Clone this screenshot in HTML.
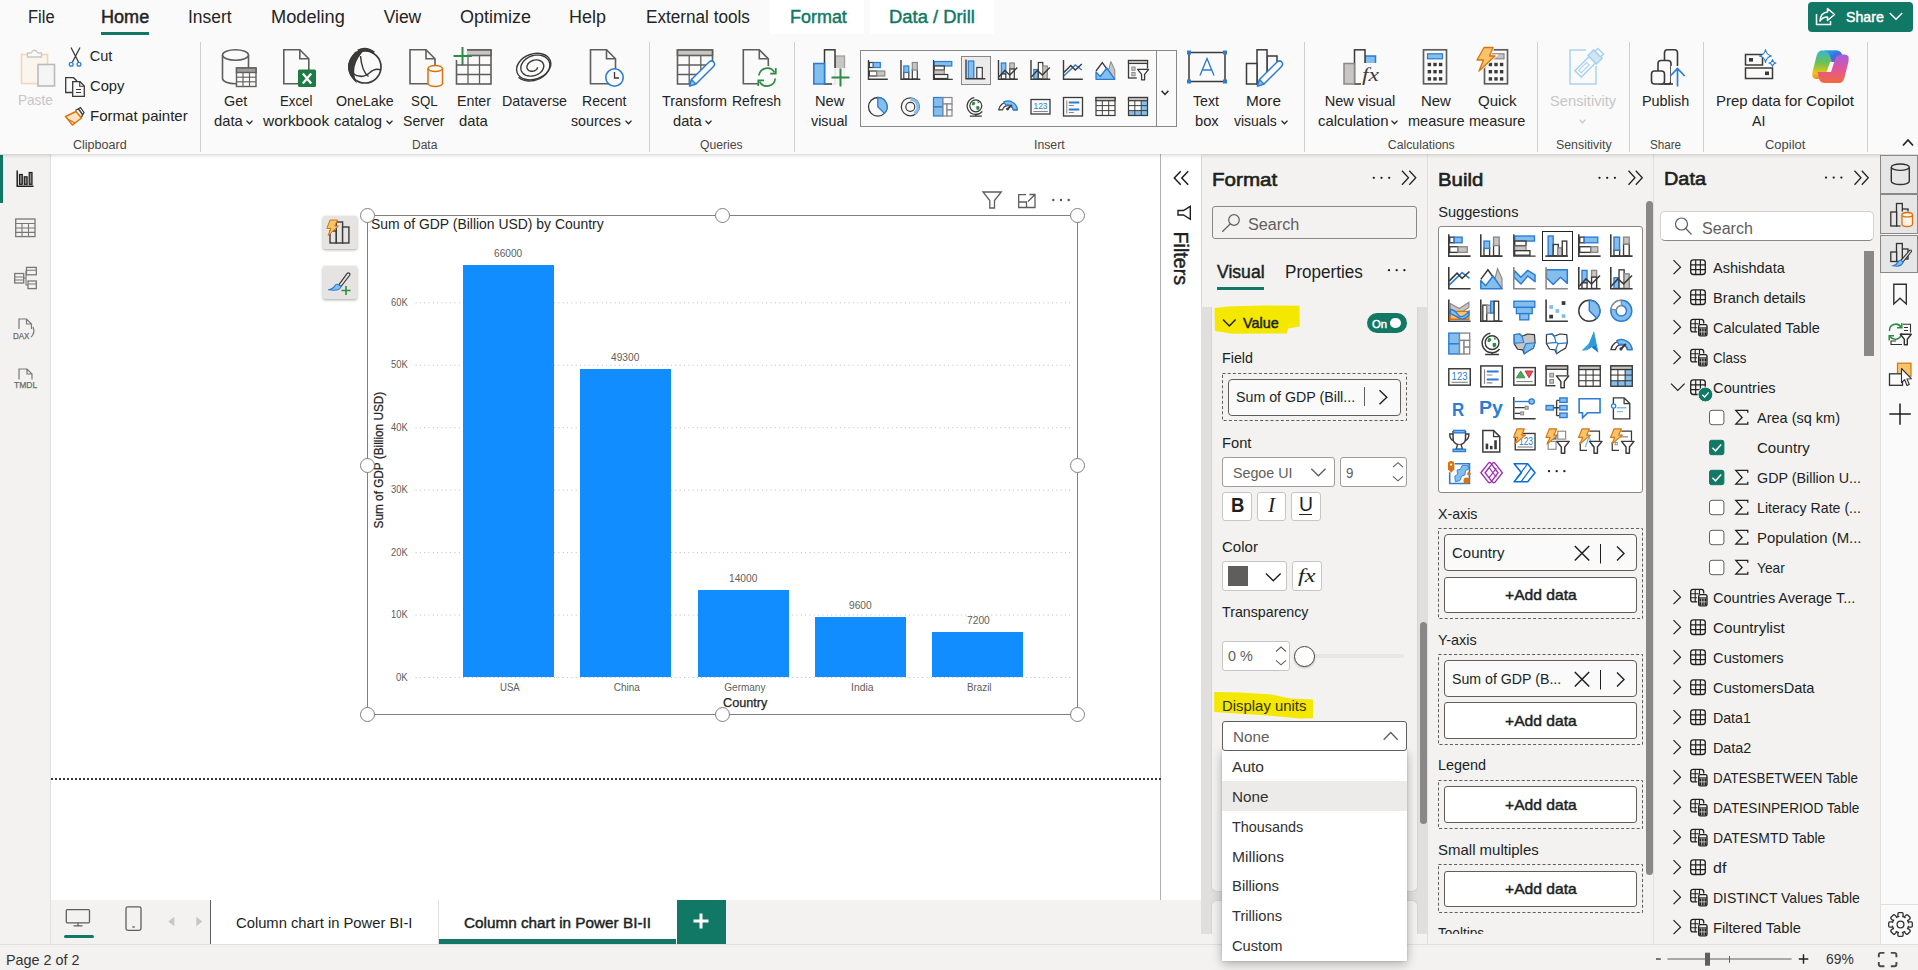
<!DOCTYPE html>
<html lang="en"><head><meta charset="utf-8"><title>Power BI Desktop</title><style>
*{box-sizing:border-box;margin:0;padding:0}
html,body{width:1918px;height:970px;overflow:hidden;background:#fff}
body{position:relative;font-family:"Liberation Sans",sans-serif;color:#252423}
#root{position:absolute;left:0;top:0;width:1918px;height:970px;overflow:hidden}
#root div,#root svg,#root span{position:absolute}
#root svg{overflow:visible}
.t{white-space:nowrap;line-height:1;transform-origin:0 0}
.sr{font-family:"Liberation Serif",serif}
.sb{-webkit-text-stroke:0.45px currentColor}
.bd{font-weight:bold}
.hd{-webkit-text-stroke:0.6px currentColor}
.sl{-webkit-text-stroke:0.25px currentColor}
</style></head><body><div id="root">
<div style="left:0px;top:0px;width:1918px;height:154px;background:#fafafa;"></div>
<div style="left:770px;top:0px;width:94px;height:34px;background:#ffffff;"></div>
<div style="left:870px;top:0px;width:124px;height:34px;background:#ffffff;"></div>
<div style="left:51px;top:154px;width:1110px;height:746px;background:#ffffff;"></div>
<div style="left:0px;top:154px;width:51px;height:790px;background:#f3f2f1;border-right:1px solid #e1dfdd;"></div>
<div style="left:0px;top:155px;width:3px;height:48px;background:#117865;"></div>
<div style="left:1160px;top:154px;width:1px;height:746px;background:#b3b0ad;"></div>
<div style="left:1161px;top:154px;width:40px;height:746px;background:#ffffff;"></div>
<div style="left:51px;top:900px;width:1150px;height:44px;background:#f3f2f1;"></div>
<div style="left:1201px;top:154px;width:226px;height:790px;background:#f3f2f1;"></div>
<div style="left:1427px;top:154px;width:1px;height:790px;background:#e1dfdd;"></div>
<div style="left:1428px;top:154px;width:225px;height:790px;background:#f3f2f1;"></div>
<div style="left:1653px;top:154px;width:1px;height:790px;background:#e1dfdd;"></div>
<div style="left:1654px;top:154px;width:226px;height:790px;background:#f3f2f1;"></div>
<div style="left:1880px;top:154px;width:38px;height:790px;background:#fafafa;border-left:1px solid #e1dfdd;"></div>
<div style="left:0px;top:944px;width:1918px;height:26px;background:#f3f2f1;border-top:1px solid #e1dfdd;"></div>
<div style="left:0px;top:154px;width:1918px;height:5px;background:linear-gradient(to bottom,rgba(0,0,0,0.13),rgba(0,0,0,0.03) 60%,rgba(0,0,0,0));"></div>
<span class="t" style="left:27.95px;top:9.00px;font-size:17.5px;color:#252423;transform:scaleX(0.9423);">File</span>
<span class="t sb" style="left:101.35px;top:9.00px;font-size:17.5px;color:#252423;transform:scaleX(1.0319);">Home</span>
<span class="t" style="left:187.65px;top:9.00px;font-size:17.5px;color:#252423;transform:scaleX(0.9953);">Insert</span>
<span class="t" style="left:270.65px;top:9.00px;font-size:17.5px;color:#252423;transform:scaleX(1.0400);">Modeling</span>
<span class="t" style="left:383.65px;top:9.00px;font-size:17.5px;color:#252423;">View</span>
<span class="t" style="left:459.65px;top:9.00px;font-size:17.5px;color:#252423;transform:scaleX(1.0265);">Optimize</span>
<span class="t" style="left:568.65px;top:9.00px;font-size:17.5px;color:#252423;transform:scaleX(1.0243);">Help</span>
<span class="t" style="left:645.65px;top:9.00px;font-size:17.5px;color:#252423;transform:scaleX(0.9797);">External tools</span>
<span class="t sb" style="left:789.65px;top:9.00px;font-size:17.5px;color:#117865;transform:scaleX(1.0259);">Format</span>
<span class="t sb" style="left:888.65px;top:9.00px;font-size:17.5px;color:#117865;transform:scaleX(1.0513);">Data / Drill</span>
<div style="left:101px;top:32px;width:48px;height:3px;background:#117865;"></div>
<div style="left:1807.5px;top:2px;width:105.5px;height:30px;background:#117865;border-radius:4px;"></div>
<span class="t sb" style="left:1845.70px;top:9.00px;font-size:15px;color:#ffffff;transform:scaleX(0.9430);">Share</span>
<svg style="left:1815px;top:6px;" width="22" height="20" viewBox="0 0 22 20"><path d="M12.5 2.5 L19.5 8.5 L12.5 14.5 V11 C8.5 11 6.5 12.5 5 15 C5.2 10 8 6.5 12.5 6 Z" fill="none" stroke="#fff" stroke-width="1.5" stroke-linejoin="round"/><path d="M1.5 8 V18.5 H15.5 V15" fill="none" stroke="#fff" stroke-width="1.5"/></svg>
<svg style="left:1889px;top:12px;" width="14" height="9" viewBox="0 0 14 9"><path d="M0.8 1 L7 7.2 L13.2 1" fill="none" stroke="#fff" stroke-width="1.6"/></svg>
<div style="left:200px;top:42px;width:1px;height:110px;background:#d2d0ce;"></div>
<div style="left:649px;top:42px;width:1px;height:110px;background:#d2d0ce;"></div>
<div style="left:794px;top:42px;width:1px;height:110px;background:#d2d0ce;"></div>
<div style="left:1304px;top:42px;width:1px;height:110px;background:#d2d0ce;"></div>
<div style="left:1537px;top:42px;width:1px;height:110px;background:#d2d0ce;"></div>
<div style="left:1628.5px;top:42px;width:1px;height:110px;background:#d2d0ce;"></div>
<div style="left:1703px;top:42px;width:1px;height:110px;background:#d2d0ce;"></div>
<div style="left:1867px;top:42px;width:1px;height:110px;background:#d2d0ce;"></div>
<span class="t" style="left:73.05px;top:139.00px;font-size:12.3px;color:#484644;transform:scaleX(1.0185);">Clipboard</span>
<span class="t" style="left:411.75px;top:139.00px;font-size:12.3px;color:#484644;transform:scaleX(0.9742);">Data</span>
<span class="t" style="left:699.75px;top:139.00px;font-size:12.3px;color:#484644;transform:scaleX(0.9896);">Queries</span>
<span class="t" style="left:1033.75px;top:139.00px;font-size:12.3px;color:#484644;transform:scaleX(0.9951);">Insert</span>
<span class="t" style="left:1387.75px;top:139.00px;font-size:12.3px;color:#484644;">Calculations</span>
<span class="t" style="left:1555.75px;top:139.00px;font-size:12.3px;color:#484644;transform:scaleX(1.0046);">Sensitivity</span>
<span class="t" style="left:1650.25px;top:139.00px;font-size:12.3px;color:#484644;transform:scaleX(0.9478);">Share</span>
<span class="t" style="left:1764.75px;top:139.00px;font-size:12.3px;color:#484644;transform:scaleX(1.0531);">Copilot</span>
<svg style="left:1902px;top:138px;" width="12" height="9" viewBox="0 0 12 9"><path d="M1 7.5 L6 2 L11 7.5" fill="none" stroke="#252423" stroke-width="1.7"/></svg>
<span class="t" style="left:17.71px;top:93.00px;font-size:14.6px;color:#c8c6c4;transform:scaleX(0.9304);">Paste</span>
<span class="t" style="left:89.71px;top:49.00px;font-size:14.6px;color:#252423;">Cut</span>
<span class="t" style="left:89.71px;top:79.00px;font-size:14.6px;color:#252423;transform:scaleX(1.0103);">Copy</span>
<span class="t" style="left:89.71px;top:109.00px;font-size:14.6px;color:#252423;transform:scaleX(1.0298);">Format painter</span>
<span class="t" style="left:224.21px;top:94.00px;font-size:14.6px;color:#252423;transform:scaleX(0.9872);">Get</span>
<span class="t" style="left:213.71px;top:114.00px;font-size:14.6px;color:#252423;transform:scaleX(1.0114);">data</span>
<svg style="left:246px;top:119.5px;" width="7" height="5" viewBox="0 0 7 5"><path d="M0.5 0.6 L3.5 3.8 L6.5 0.6" fill="none" stroke="#252423" stroke-width="1.3"/></svg>
<span class="t" style="left:280.01px;top:94.00px;font-size:14.6px;color:#252423;transform:scaleX(0.9087);">Excel</span>
<span class="t" style="left:263.01px;top:114.00px;font-size:14.6px;color:#252423;transform:scaleX(1.0586);">workbook</span>
<span class="t" style="left:336.41px;top:94.00px;font-size:14.6px;color:#252423;transform:scaleX(0.9746);">OneLake</span>
<span class="t" style="left:333.51px;top:114.00px;font-size:14.6px;color:#252423;transform:scaleX(1.0184);">catalog</span>
<svg style="left:386px;top:119.5px;" width="7" height="5" viewBox="0 0 7 5"><path d="M0.5 0.6 L3.5 3.8 L6.5 0.6" fill="none" stroke="#252423" stroke-width="1.3"/></svg>
<span class="t" style="left:410.51px;top:94.00px;font-size:14.6px;color:#252423;transform:scaleX(0.9119);">SQL</span>
<span class="t" style="left:403.41px;top:114.00px;font-size:14.6px;color:#252423;transform:scaleX(0.9662);">Server</span>
<span class="t" style="left:457.21px;top:94.00px;font-size:14.6px;color:#252423;transform:scaleX(0.9753);">Enter</span>
<span class="t" style="left:459.41px;top:114.00px;font-size:14.6px;color:#252423;transform:scaleX(1.0149);">data</span>
<span class="t" style="left:502.21px;top:94.00px;font-size:14.6px;color:#252423;transform:scaleX(0.9762);">Dataverse</span>
<span class="t" style="left:581.71px;top:94.00px;font-size:14.6px;color:#252423;transform:scaleX(0.9628);">Recent</span>
<span class="t" style="left:571.41px;top:114.00px;font-size:14.6px;color:#252423;transform:scaleX(0.9750);">sources</span>
<svg style="left:625px;top:119.5px;" width="7" height="5" viewBox="0 0 7 5"><path d="M0.5 0.6 L3.5 3.8 L6.5 0.6" fill="none" stroke="#252423" stroke-width="1.3"/></svg>
<span class="t" style="left:662.21px;top:94.00px;font-size:14.6px;color:#252423;transform:scaleX(0.9845);">Transform</span>
<span class="t" style="left:672.71px;top:114.00px;font-size:14.6px;color:#252423;transform:scaleX(1.0044);">data</span>
<svg style="left:705px;top:119.5px;" width="7" height="5" viewBox="0 0 7 5"><path d="M0.5 0.6 L3.5 3.8 L6.5 0.6" fill="none" stroke="#252423" stroke-width="1.3"/></svg>
<span class="t" style="left:732.21px;top:94.00px;font-size:14.6px;color:#252423;transform:scaleX(0.9593);">Refresh</span>
<span class="t" style="left:815.01px;top:94.00px;font-size:14.6px;color:#252423;transform:scaleX(1.0078);">New</span>
<span class="t" style="left:811.41px;top:114.00px;font-size:14.6px;color:#252423;transform:scaleX(0.9790);">visual</span>
<span class="t" style="left:1193.41px;top:94.00px;font-size:14.6px;color:#252423;transform:scaleX(0.9725);">Text</span>
<span class="t" style="left:1194.71px;top:114.00px;font-size:14.6px;color:#252423;transform:scaleX(1.0084);">box</span>
<span class="t" style="left:1245.51px;top:94.00px;font-size:14.6px;color:#252423;transform:scaleX(1.0505);">More</span>
<span class="t" style="left:1233.71px;top:114.00px;font-size:14.6px;color:#252423;transform:scaleX(0.9579);">visuals</span>
<svg style="left:1280.8px;top:119.5px;" width="7" height="5" viewBox="0 0 7 5"><path d="M0.5 0.6 L3.5 3.8 L6.5 0.6" fill="none" stroke="#252423" stroke-width="1.3"/></svg>
<span class="t" style="left:1324.71px;top:94.00px;font-size:14.6px;color:#252423;">New visual</span>
<span class="t" style="left:1317.51px;top:114.00px;font-size:14.6px;color:#252423;transform:scaleX(1.0212);">calculation</span>
<svg style="left:1391px;top:119.5px;" width="7" height="5" viewBox="0 0 7 5"><path d="M0.5 0.6 L3.5 3.8 L6.5 0.6" fill="none" stroke="#252423" stroke-width="1.3"/></svg>
<span class="t" style="left:1421.41px;top:94.00px;font-size:14.6px;color:#252423;transform:scaleX(1.0215);">New</span>
<span class="t" style="left:1407.71px;top:114.00px;font-size:14.6px;color:#252423;transform:scaleX(0.9956);">measure</span>
<span class="t" style="left:1477.71px;top:94.00px;font-size:14.6px;color:#252423;transform:scaleX(1.0326);">Quick</span>
<span class="t" style="left:1468.71px;top:114.00px;font-size:14.6px;color:#252423;transform:scaleX(0.9938);">measure</span>
<span class="t" style="left:1550.21px;top:94.00px;font-size:14.6px;color:#c8c6c4;transform:scaleX(1.0080);">Sensitivity</span>
<svg style="left:1579px;top:119px;" width="7" height="5" viewBox="0 0 7 5"><path d="M0.5 0.6 L3.5 3.8 L6.5 0.6" fill="none" stroke="#c8c6c4" stroke-width="1.3"/></svg>
<span class="t" style="left:1642.21px;top:94.00px;font-size:14.6px;color:#252423;transform:scaleX(0.9865);">Publish</span>
<span class="t" style="left:1715.71px;top:94.00px;font-size:14.6px;color:#252423;transform:scaleX(1.0220);">Prep data for</span>
<span class="t" style="left:1751.71px;top:114.00px;font-size:14.6px;color:#252423;transform:scaleX(0.9734);">AI</span>
<span class="t" style="left:1806.41px;top:94.00px;font-size:14.6px;color:#252423;transform:scaleX(1.0571);">Copilot</span>
<div style="left:860px;top:50px;width:297px;height:77px;background:#fafafa;border:1px solid #8a8886;"></div>
<div style="left:1156px;top:50px;width:21px;height:77px;background:#fafafa;border:1px solid #8a8886;"></div>
<svg style="left:1161px;top:89.5px;" width="8" height="6" viewBox="0 0 8 6"><path d="M0.6 0.8 L4 4.4 L7.4 0.8" fill="none" stroke="#252423" stroke-width="1.5"/></svg>
<div style="left:961px;top:55.5px;width:30px;height:29.5px;background:#ebebeb;border:1px solid #8a8886;"></div>
<svg style="left:0px;top:0px;" width="1918" height="160" viewBox="0 0 1918 160"><g opacity="0.55"><rect x="21.5" y="54.5" width="26" height="29" fill="#fbf3e6" stroke="#e8bd7e" stroke-width="1.6"/><path d="M27.5 57 V53 H31 Q34.5 47.5 38 53 H41.5 V57 Z" fill="#fafafa" stroke="#a19f9d" stroke-width="1.3"/><rect x="38" y="64.5" width="16.5" height="21.5" fill="#f3f2f1" stroke="#8a8886" stroke-width="1.6"/></g><path d="M71 47.5 L78.5 62 M80 47.5 L72.5 62" stroke="#3b3a39" stroke-width="1.3" fill="none"/><circle cx="71.2" cy="64.2" r="1.9" fill="none" stroke="#2b7cd3" stroke-width="1.3"/><circle cx="79" cy="64.2" r="1.9" fill="none" stroke="#2b7cd3" stroke-width="1.3"/><path d="M72 92.5 H65.7 V77.7 H73.5 L77 81" fill="none" stroke="#3b3a39" stroke-width="1.3"/><path d="M72.7 81.7 H80 L84.3 86 V96.3 H72.7 Z" fill="#fafafa" stroke="#3b3a39" stroke-width="1.3"/><path d="M79.7 82 V86.3 H84" fill="none" stroke="#3b3a39" stroke-width="1.1"/><path d="M76 89.5 H81 M76 92.5 H81" stroke="#3b3a39" stroke-width="1"/><path d="M65.5 116.5 L76 111.5 L81.5 118 L72.5 125 Z" fill="#fbe3c4" stroke="#d9730d" stroke-width="1.5" stroke-linejoin="round"/><path d="M68 119.3 L75 123" stroke="#d9730d" stroke-width="1.2"/><path d="M75.5 110.5 L80.5 107.5 L84 112.5 L81.5 117 M78.5 109 L82.5 114.5" fill="none" stroke="#3b3a39" stroke-width="1.3" stroke-linejoin="round"/><path d="M222.5 55.0 V78.6 A13.0 5.2 0 0 0 248.5 78.6 V55.0" fill="#fafafa" stroke="#605e5c" stroke-width="1.6"/><ellipse cx="235.5" cy="55.0" rx="13.0" ry="5.2" fill="#fafafa" stroke="#605e5c" stroke-width="1.6"/><rect x="236.5" y="68" width="19.5" height="18.5" fill="#fafafa" stroke="#605e5c" stroke-width="1.4"/><rect x="236.5" y="68" width="19.5" height="4.5" fill="#a19f9d" stroke="#605e5c" stroke-width="1.4"/><line x1="236.5" y1="77.2" x2="256.0" y2="77.2" stroke="#605e5c" stroke-width="1.1199999999999999"/><line x1="236.5" y1="81.8" x2="256.0" y2="81.8" stroke="#605e5c" stroke-width="1.1199999999999999"/><line x1="243.0" y1="72.5" x2="243.0" y2="86.5" stroke="#605e5c" stroke-width="1.1199999999999999"/><line x1="249.5" y1="72.5" x2="249.5" y2="86.5" stroke="#605e5c" stroke-width="1.1199999999999999"/><path d="M283.8 49.8 H299.8 L308.8 58.8 V83.8 H283.8 Z" fill="#fafafa" stroke="#605e5c" stroke-width="1.6" stroke-linejoin="miter"/><path d="M299.8 49.8 V58.8 H308.8" fill="none" stroke="#605e5c" stroke-width="1.6"/><rect x="298" y="69.5" width="18" height="17.5" rx="1.5" fill="#1e7b45"/><path d="M302.8 73.5 L311.2 83.5 M311.2 73.5 L302.8 83.5" stroke="#fff" stroke-width="2.2"/><circle cx="365" cy="67" r="16" fill="none" stroke="#3b3a39" stroke-width="1.7"/><path d="M355 52 Q340 68 357 83.5 Q349 66 364 50.5 Q359 49.5 355 52 Z" fill="#3b3a39"/><path d="M358 51 Q366 46.5 374 53" fill="none" stroke="#3b3a39" stroke-width="3"/><path d="M360.5 56 Q362 72 368.5 76.5 M352 73 Q362 80 370 72.5 Q375 67.5 381 70" fill="none" stroke="#3b3a39" stroke-width="1.5"/><path d="M410 49.8 H426 L435 58.8 V83.8 H410 Z" fill="#fafafa" stroke="#605e5c" stroke-width="1.6" stroke-linejoin="miter"/><path d="M426 49.8 V58.8 H435" fill="none" stroke="#605e5c" stroke-width="1.6"/><path d="M428 68.5 V83.5 A7.25 3 0 0 0 442.5 83.5 V68.5" fill="#fafafa" stroke="#d9730d" stroke-width="1.5"/><ellipse cx="435.25" cy="68.5" rx="7.25" ry="3" fill="#fafafa" stroke="#d9730d" stroke-width="1.5"/><rect x="456.5" y="50" width="34.5" height="34" fill="#fafafa" stroke="#605e5c" stroke-width="1.6"/><rect x="456.5" y="50" width="34.5" height="5.5" fill="#c8c6c4" stroke="#605e5c" stroke-width="1.6"/><line x1="456.5" y1="65.0" x2="491.0" y2="65.0" stroke="#605e5c" stroke-width="1.2800000000000002"/><line x1="456.5" y1="74.5" x2="491.0" y2="74.5" stroke="#605e5c" stroke-width="1.2800000000000002"/><line x1="468.0" y1="55.5" x2="468.0" y2="84" stroke="#605e5c" stroke-width="1.2800000000000002"/><line x1="479.5" y1="55.5" x2="479.5" y2="84" stroke="#605e5c" stroke-width="1.2800000000000002"/><rect x="452" y="46" width="15" height="14" fill="#fafafa"/><path d="M462.5 47 V65.5 M453.5 56 H472" stroke="#2e8b45" stroke-width="2"/><path d="M537.7 67.3 L537.5 67.8 L537.3 68.4 L536.9 69.0 L536.4 69.5 L535.8 70.0 L535.1 70.5 L534.3 70.8 L533.4 71.1 L532.5 71.2 L531.5 71.3 L530.6 71.2 L529.8 70.9 L529.0 70.6 L528.3 70.1 L527.7 69.5 L527.2 68.7 L527.0 67.9 L526.9 67.0 L527.0 66.1 L527.3 65.2 L527.8 64.2 L528.5 63.3 L529.4 62.4 L530.4 61.7 L531.6 61.0 L532.9 60.5 L534.2 60.1 L535.7 59.9 L537.1 59.9 L538.4 60.1 L539.7 60.5 L540.9 61.1 L541.9 61.8 L542.7 62.7 L543.3 63.8 L543.7 65.0 L543.8 66.3 L543.6 67.6 L543.1 68.9 L542.4 70.2 L541.4 71.5 L540.2 72.7 L538.7 73.8 L537.1 74.6 L535.3 75.3 L533.5 75.8 L531.6 76.1 L529.7 76.1 L527.9 75.8 L526.1 75.3 L524.6 74.6 L523.3 73.6 L522.2 72.4 L521.4 71.0 L520.9 69.4 L520.8 67.8 L521.0 66.1 L521.6 64.3 L522.6 62.6 L523.8 61.0 L525.4 59.4 L527.2 58.1 L529.3 56.9 L531.5 56.0 L533.9 55.4 L536.3 55.1 L538.6 55.1 L540.9 55.4 L543.1 56.0 L545.0 56.9 L546.7 58.2 L548.1 59.7 L549.1 61.4 L549.7 63.3 L549.9 65.3 L549.6 67.4 L548.9 69.5 L547.8 71.6 L546.3 73.7 L544.4 75.5 L542.2 77.2 L539.7 78.6 L537.0 79.7 L534.2 80.5 L531.3 80.9 L528.4 81.0 L525.6 80.6 L523.0 79.9 L520.6 78.8 L518.6 77.4" fill="none" stroke="#3b3a39" stroke-width="1.4" stroke-linejoin="round"/><ellipse cx="533.7" cy="66.6" rx="17.6" ry="12.6" transform="rotate(-20 533.7 66.6)" fill="none" stroke="#3b3a39" stroke-width="1.4"/><path d="M590.5 49.8 H606.5 L615.5 58.8 V83.8 H590.5 Z" fill="#fafafa" stroke="#605e5c" stroke-width="1.6" stroke-linejoin="miter"/><path d="M606.5 49.8 V58.8 H615.5" fill="none" stroke="#605e5c" stroke-width="1.6"/><circle cx="614.5" cy="77.5" r="8.7" fill="#fafafa" stroke="#2b7cd3" stroke-width="1.6"/><path d="M614.5 72 V78 H619" fill="none" stroke="#3b3a39" stroke-width="1.3"/><rect x="677.5" y="50" width="35" height="34" fill="#fafafa" stroke="#605e5c" stroke-width="1.6"/><rect x="677.5" y="50" width="35" height="5.5" fill="#c8c6c4" stroke="#605e5c" stroke-width="1.6"/><line x1="677.5" y1="65.0" x2="712.5" y2="65.0" stroke="#605e5c" stroke-width="1.2800000000000002"/><line x1="677.5" y1="74.5" x2="712.5" y2="74.5" stroke="#605e5c" stroke-width="1.2800000000000002"/><line x1="689.2" y1="55.5" x2="689.2" y2="84" stroke="#605e5c" stroke-width="1.2800000000000002"/><line x1="700.8" y1="55.5" x2="700.8" y2="84" stroke="#605e5c" stroke-width="1.2800000000000002"/><path d="M689 86 L700 72 L716 60 L716 86 Z" fill="#fafafa"/><path d="M689.5 86.0 L696.0 84.0 L713.3 66.7 Q715.8 64.2 713.6 61.9 Q711.3 59.7 708.8 62.2 L691.5 79.5 Z" fill="#fafafa" stroke="#2b7cd3" stroke-width="1.5" stroke-linejoin="round"/><path d="M689.5 86.0 L696.0 84.0 L691.5 79.5 Z" fill="#83beec" stroke="#2b7cd3" stroke-width="1.2" stroke-linejoin="round"/><path d="M743.3 49.8 H759.3 L768.3 58.8 V83.8 H743.3 Z" fill="#fafafa" stroke="#605e5c" stroke-width="1.6" stroke-linejoin="miter"/><path d="M759.3 49.8 V58.8 H768.3" fill="none" stroke="#605e5c" stroke-width="1.6"/><circle cx="767" cy="77" r="11" fill="#fafafa"/><path d="M759 75.5 A8.3 8.3 0 0 1 774.5 72.5 M775.2 78.5 A8.3 8.3 0 0 1 759.5 81.5" fill="none" stroke="#2e8b45" stroke-width="1.7"/><path d="M775.8 68 V73.6 H770.2 M758.3 86 V80.4 H764" fill="none" stroke="#2e8b45" stroke-width="1.7"/><rect x="835" y="56" width="9.5" height="28" fill="#c8c6c4" stroke="#a19f9d" stroke-width="1.3"/><rect x="824.5" y="49.8" width="10.5" height="34.2" fill="#fafafa" stroke="#3b3a39" stroke-width="1.5"/><rect x="813.8" y="63.5" width="10.7" height="20.5" fill="#83beec" stroke="#2b7cd3" stroke-width="1.5"/><rect x="832" y="68" width="18" height="18" fill="#fafafa" opacity="0.9"/><path d="M840.5 68.5 V86.5 M831.5 77.5 H849.5" stroke="#2e8b45" stroke-width="2"/><rect x="1189" y="52.5" width="36" height="29" fill="#fafafa" stroke="#3b3a39" stroke-width="1.5"/><rect x="1187" y="50.5" width="4" height="4" fill="#2b7cd3"/><rect x="1223" y="50.5" width="4" height="4" fill="#2b7cd3"/><rect x="1187" y="79.5" width="4" height="4" fill="#2b7cd3"/><rect x="1223" y="79.5" width="4" height="4" fill="#2b7cd3"/><path d="M1200 75.5 L1207 58.5 L1214 75.5 M1202.3 70 H1211.7" fill="none" stroke="#2b7cd3" stroke-width="1.4"/><g fill="#fafafa" stroke="#3b3a39" stroke-width="1.5"><rect x="1267" y="56" width="10" height="28"/><rect x="1257" y="49.8" width="10" height="34.2"/><rect x="1246.5" y="63.5" width="10.5" height="20.5"/></g><path d="M1257 86 L1268 72 L1284 60 L1284 86 Z" fill="#fafafa"/><path d="M1257.5 86.0 L1264.0 84.0 L1281.3 66.7 Q1283.8 64.2 1281.6 61.9 Q1279.3 59.7 1276.8 62.2 L1259.5 79.5 Z" fill="#fafafa" stroke="#2b7cd3" stroke-width="1.5" stroke-linejoin="round"/><path d="M1257.5 86.0 L1264.0 84.0 L1259.5 79.5 Z" fill="#83beec" stroke="#2b7cd3" stroke-width="1.2" stroke-linejoin="round"/><rect x="1365" y="56" width="10.5" height="9" fill="#83beec" stroke="#2b7cd3" stroke-width="1.5"/><rect x="1354.5" y="49.8" width="10.5" height="34.2" fill="#fafafa" stroke="#3b3a39" stroke-width="1.5"/><rect x="1344" y="63.5" width="10.5" height="20.5" fill="#c8c6c4" stroke="#8a8886" stroke-width="1.5"/><rect x="1361" y="63" width="18" height="24" fill="#fafafa"/><rect x="1423.5" y="49.8" width="23" height="34" fill="#fafafa" stroke="#605e5c" stroke-width="1.7"/><rect x="1427.5" y="53.8" width="15" height="5" fill="#83beec" stroke="#2b7cd3" stroke-width="1.2"/><rect x="1427.7" y="62.8" width="3.4" height="3.4" fill="#3b3a39"/><rect x="1433.3" y="62.8" width="3.4" height="3.4" fill="#3b3a39"/><rect x="1438.9" y="62.8" width="3.4" height="3.4" fill="#3b3a39"/><rect x="1427.7" y="70.0" width="3.4" height="3.4" fill="#3b3a39"/><rect x="1433.3" y="70.0" width="3.4" height="3.4" fill="#3b3a39"/><rect x="1438.9" y="70.0" width="3.4" height="3.4" fill="#3b3a39"/><rect x="1427.7" y="77.2" width="3.4" height="3.4" fill="#3b3a39"/><rect x="1433.3" y="77.2" width="3.4" height="3.4" fill="#3b3a39"/><rect x="1438.9" y="77.2" width="3.4" height="3.4" fill="#3b3a39"/><rect x="1484.5" y="49.8" width="23" height="34" fill="#fafafa" stroke="#605e5c" stroke-width="1.7"/><rect x="1491" y="53.8" width="13" height="5" fill="#c8c6c4" stroke="#8a8886" stroke-width="1.2"/><rect x="1488.7" y="62.8" width="3.4" height="3.4" fill="#3b3a39"/><rect x="1494.3" y="62.8" width="3.4" height="3.4" fill="#3b3a39"/><rect x="1499.9" y="62.8" width="3.4" height="3.4" fill="#3b3a39"/><rect x="1488.7" y="70.0" width="3.4" height="3.4" fill="#3b3a39"/><rect x="1494.3" y="70.0" width="3.4" height="3.4" fill="#3b3a39"/><rect x="1499.9" y="70.0" width="3.4" height="3.4" fill="#3b3a39"/><rect x="1488.7" y="77.2" width="3.4" height="3.4" fill="#3b3a39"/><rect x="1494.3" y="77.2" width="3.4" height="3.4" fill="#3b3a39"/><rect x="1499.9" y="77.2" width="3.4" height="3.4" fill="#3b3a39"/><path d="M1484 47.5 L1493 47.5 L1489.5 56 L1495 56 L1479 71 L1483.5 60 L1477 60 Z" fill="#fafafa" stroke="#fafafa" stroke-width="3"/><path d="M1484 47.5 L1493 47.5 L1489.5 56 L1495 56 L1479 71 L1483.5 60 L1477 60 Z" fill="#f7c46c" stroke="#d9730d" stroke-width="1.3" stroke-linejoin="round"/><g stroke="#a9d3ef" fill="#fafafa" stroke-width="1.5"><path d="M1586 50 H1570 V84 H1596 V66"/><g transform="rotate(-45 1588 64)"><rect x="1574" y="59.5" width="20" height="9"/><rect x="1577" y="62" width="11" height="3.5" stroke-width="1.1"/><rect x="1594" y="58" width="8" height="12" fill="#cfe6f6"/><rect x="1602" y="60" width="4" height="8"/></g></g><g fill="#fafafa" stroke="#3b3a39" stroke-width="1.6"><rect x="1664.5" y="49.8" width="13" height="34" rx="3"/><rect x="1658" y="60.5" width="13" height="23.5" rx="3"/><rect x="1651.5" y="71" width="13" height="13" rx="3"/></g><rect x="1671" y="66" width="15" height="21" fill="#fafafa"/><path d="M1677.5 86.5 V69 M1670.3 76 L1677.5 68.5 L1684.7 76" fill="none" stroke="#2b7cd3" stroke-width="1.7"/><path d="M1664 84 H1673" stroke="#3b3a39" stroke-width="1.6"/><g fill="#fafafa" stroke="#3b3a39" stroke-width="1.5"><rect x="1745.5" y="54.5" width="17" height="10.5"/><rect x="1745.5" y="68" width="27" height="10.5"/></g><rect x="1749" y="58" width="4" height="3.6" fill="#3b3a39"/><rect x="1765" y="71.5" width="4" height="3.6" fill="#3b3a39"/><path d="M1765.5 49.5 Q1766.5 55 1771.5 56 Q1766.5 57 1765.5 62.5 Q1764.5 57 1759.5 56 Q1764.5 55 1765.5 49.5 Z M1772.5 59.5 Q1773 62.5 1776 63 Q1773 63.5 1772.5 66.5 Q1772 63.5 1769 63 Q1772 62.5 1772.5 59.5 Z" fill="#fafafa" stroke="#2b7cd3" stroke-width="1.1" stroke-linejoin="round"/><defs><linearGradient id="cp1" x1="0" y1="0" x2="1" y2="1"><stop offset="0" stop-color="#2aa9e8"/><stop offset="0.5" stop-color="#3b6fe0"/><stop offset="1" stop-color="#8a52d6"/></linearGradient><linearGradient id="cp2" x1="0" y1="0" x2="0" y2="1"><stop offset="0" stop-color="#35b6d8"/><stop offset="0.45" stop-color="#6fc24a"/><stop offset="0.8" stop-color="#f2c21a"/><stop offset="1" stop-color="#f08a24"/></linearGradient><linearGradient id="cp3" x1="0" y1="0" x2="0" y2="1"><stop offset="0" stop-color="#a45fe0"/><stop offset="0.5" stop-color="#e0559c"/><stop offset="1" stop-color="#f26a3a"/></linearGradient></defs><path d="M1822 50.5 H1836 Q1841 50.5 1842 55 L1844 62 H1830 L1826 74 Q1824.5 79 1819 79 H1816.5 Q1811 79 1812.5 72 L1816.5 56 Q1818 50.5 1822 50.5 Z" fill="url(#cp2)"/><path d="M1824 50.5 H1836 Q1841 50.5 1842 55 L1844 62 H1832 L1830 56 Q1829 52 1824 50.5 Z" fill="url(#cp1)"/><path d="M1839 83 H1825 Q1820 83 1819 78.5 L1817.5 72 H1831 L1835 59.5 Q1836.5 54.5 1842 54.5 H1844.5 Q1850 54.5 1848.5 61.5 L1844.5 77.5 Q1843 83 1839 83 Z" fill="url(#cp3)"/></svg>
<span class="t sr" style="left:1361.62px;top:65.00px;font-size:19px;color:#3b3a39;font-style:italic;transform:scaleX(1.2355);">fx</span>
<svg style="left:0px;top:0px;" width="1918" height="160" viewBox="0 0 1918 160"><rect x="869.3" y="62.5" width="4" height="5" fill="#fafafa" stroke="#3b3a39" stroke-width="1.2"/><rect x="873.3" y="62.5" width="7" height="5" fill="#83beec" stroke="#2b7cd3" stroke-width="1.2"/><rect x="869.3" y="71.0" width="7.5" height="5" fill="#fafafa" stroke="#3b3a39" stroke-width="1.2"/><rect x="876.8" y="71.0" width="8" height="5" fill="#c8c6c4" stroke="#8a8886" stroke-width="1.2"/><path d="M868.5 60 V79.3 H887.8" fill="none" stroke="#3b3a39" stroke-width="1.4"/><rect x="903.8" y="72.0" width="5" height="7" fill="#fafafa" stroke="#3b3a39" stroke-width="1.2"/><rect x="903.8" y="66.0" width="5" height="6.5" fill="#83beec" stroke="#2b7cd3" stroke-width="1.2"/><rect x="912.3" y="69.5" width="5" height="9.5" fill="#fafafa" stroke="#3b3a39" stroke-width="1.2"/><rect x="912.3" y="62.5" width="5" height="7.5" fill="#c8c6c4" stroke="#8a8886" stroke-width="1.2"/><path d="M901.0 60 V79.3 H920.3" fill="none" stroke="#3b3a39" stroke-width="1.4"/><rect x="934.3" y="61.5" width="17.5" height="4.5" fill="#83beec" stroke="#2b7cd3" stroke-width="1.2"/><rect x="934.3" y="66.0" width="10" height="4" fill="#fafafa" stroke="#3b3a39" stroke-width="1.2"/><rect x="934.3" y="70.5" width="10" height="4" fill="#c8c6c4" stroke="#8a8886" stroke-width="1.2"/><rect x="934.3" y="74.5" width="13.5" height="4" fill="#fafafa" stroke="#3b3a39" stroke-width="1.2"/><path d="M933.5 60 V79.3 H952.8" fill="none" stroke="#3b3a39" stroke-width="1.2"/><rect x="968.3" y="61.0" width="5.5" height="17.5" fill="#83beec" stroke="#2b7cd3" stroke-width="1.2"/><rect x="976.8" y="67.5" width="5.5" height="11" fill="#fafafa" stroke="#3b3a39" stroke-width="1.2"/><path d="M966.0 59.5 V78.8 H985.3" fill="none" stroke="#3b3a39" stroke-width="1.4"/><rect x="1001.3" y="63.0" width="4.5" height="11" fill="#83beec" stroke="#2b7cd3" stroke-width="1.2"/><rect x="1009.8" y="63.0" width="4.5" height="6" fill="#c8c6c4" stroke="#8a8886" stroke-width="1.2"/><rect x="1001.3" y="74.0" width="4.5" height="5" fill="#fafafa" stroke="#3b3a39" stroke-width="1.2"/><rect x="1009.8" y="69.0" width="4.5" height="10" fill="#fafafa" stroke="#3b3a39" stroke-width="1.2"/><path d="M998.8 77 L1004.8 70.5 L1009.8 75 L1017.3 67.5" fill="none" stroke="#3b3a39" stroke-width="1.4"/><path d="M998.5 60 V79.3 H1017.8" fill="none" stroke="#3b3a39" stroke-width="1.4"/><rect x="1033.8" y="69.5" width="4.5" height="9.5" fill="#83beec" stroke="#2b7cd3" stroke-width="1.2"/><rect x="1038.3" y="62.5" width="4.5" height="16.5" fill="#fafafa" stroke="#3b3a39" stroke-width="1.2"/><rect x="1042.8" y="66.0" width="4.5" height="13" fill="#c8c6c4" stroke="#8a8886" stroke-width="1.2"/><path d="M1031.3 77 L1037.3 70.5 L1042.3 75 L1049.8 67.5" fill="none" stroke="#3b3a39" stroke-width="1.4"/><path d="M1031.0 60 V79.3 H1050.3" fill="none" stroke="#3b3a39" stroke-width="1.4"/><path d="M1063.8 76 L1075.3 65 L1081.8 70" fill="none" stroke="#2b7cd3" stroke-width="1.4"/><path d="M1063.8 72.5 L1070.8 65.5 L1075.3 70 L1081.8 64" fill="none" stroke="#3b3a39" stroke-width="1.4"/><path d="M1063.5 60 V79.3 H1082.8" fill="none" stroke="#3b3a39" stroke-width="1.4"/><path d="M1106.3 79 L1110.8 61.5 L1114.8 70 V79 Z" fill="#c8c6c4" stroke="#8a8886" stroke-width="1"/><path d="M1096.0 71 L1102.3 62.5 L1111.3 75" fill="#fafafa" stroke="#3b3a39" stroke-width="1.3"/><path d="M1096.0 72 L1100.3 76.5 L1106.8 68 L1114.8 79.3 H1096.0 Z" fill="#83beec" stroke="#2b7cd3" stroke-width="1.3" stroke-linejoin="round"/><rect x="1128.5" y="60.5" width="19" height="17.5" fill="#fafafa" stroke="#3b3a39" stroke-width="1.3"/><rect x="1128.5" y="60.5" width="19" height="3" fill="#c8c6c4" stroke="#3b3a39" stroke-width="1.1"/><rect x="1131.8" y="67.0" width="3.3" height="3.3" fill="#c8c6c4" stroke="#8a8886" stroke-width="0.9"/><rect x="1131.8" y="72.5" width="3.3" height="3.3" fill="#c8c6c4" stroke="#8a8886" stroke-width="0.9"/><rect x="1136.8" y="68.5" width="12.5" height="12" fill="#fafafa"/><path d="M1137.6 69.3 H1148.6 L1144.6 74.3 V79.8 H1141.6 V74.3 Z" fill="#fafafa" stroke="#3b3a39" stroke-width="1.3" stroke-linejoin="round"/><circle cx="877.8" cy="106.8" r="9.3" fill="#fafafa" stroke="#3b3a39" stroke-width="1.3"/><path d="M877.8 97.5 A9.3 9.3 0 0 1 884.4 113.4 L877.8 106.8 Z" fill="#83beec" stroke="#2b7cd3" stroke-width="1.3" stroke-linejoin="round"/><circle cx="910.3" cy="106.8" r="9" fill="none" stroke="#3b3a39" stroke-width="1.2"/><circle cx="910.3" cy="106.8" r="4.5" fill="none" stroke="#3b3a39" stroke-width="1.2"/><path d="M910.3 99.3 A7.5 7.5 0 0 1 914.3 113.3" fill="none" stroke="#83beec" stroke-width="3.2"/><rect x="933.5" y="97.5" width="9.5" height="9.5" fill="#83beec" stroke="#2b7cd3" stroke-width="1.2"/><rect x="933.5" y="107.0" width="9.5" height="9" fill="#83beec" stroke="#2b7cd3" stroke-width="1.2"/><rect x="943.0" y="97.5" width="9" height="6.5" fill="#fafafa" stroke="#8a8886" stroke-width="1.2"/><rect x="943.0" y="104.0" width="4" height="12" fill="#fafafa" stroke="#8a8886" stroke-width="1.2"/><rect x="947.0" y="104.0" width="5" height="6" fill="#fafafa" stroke="#8a8886" stroke-width="1.2"/><rect x="947.0" y="110.0" width="5" height="6" fill="#fafafa" stroke="#8a8886" stroke-width="1.2"/><circle cx="975.8" cy="105.8" r="6" fill="#fafafa" stroke="#3b3a39" stroke-width="1.2"/><path d="M972.3 102.3 Q974.8 100.8 975.3 103.8 Q973.3 106.3 971.8 104.8 Z M976.3 106.3 Q980.3 104.8 979.3 108.8 Q977.3 111.3 976.3 108.8 Z M977.3 100.8 L979.8 102.8 L977.8 103.3 Z" fill="#2e8b45"/><path d="M974.3 97.6 A8.5 8.5 0 1 0 982.3 111.3" fill="none" stroke="#3b3a39" stroke-width="1.3"/><path d="M975.8 114.1 V116.1 M969.8 116.19999999999999 H981.8" stroke="#3b3a39" stroke-width="1.3"/><path d="M998.5999999999999 109.8 A9.5 9.5 0 0 1 1017.3 109.8 H1013.3 A5.5 5.5 0 0 0 1002.5999999999999 109.8 Z" fill="#fafafa" stroke="#3b3a39" stroke-width="1.2" stroke-linejoin="round"/><path d="M1003.8 101.8 A9.5 9.5 0 0 1 1017.3 109.8 H1013.3 A5.5 5.5 0 0 0 1005.8 105.3 Z" fill="#83beec" stroke="#2b7cd3" stroke-width="1.2" stroke-linejoin="round"/><path d="M1007.3 109.3 L1011.8 104.8" stroke="#3b3a39" stroke-width="1.8"/><circle cx="1007.5" cy="109.1" r="1.4" fill="#3b3a39"/><rect x="1031.0" y="99.5" width="19" height="14.5" fill="#fafafa" stroke="#3b3a39" stroke-width="1.3"/><path d="M1033.3 111.5 H1047.8" stroke="#8a8886" stroke-width="1"/><text x="1040.5" y="109.2" font-family="Liberation Sans,sans-serif" font-size="9.5" text-anchor="middle" fill="#2b7cd3" textLength="14" lengthAdjust="spacingAndGlyphs">123</text><rect x="1063.5" y="97.5" width="19" height="18.5" fill="#fafafa" stroke="#3b3a39" stroke-width="1.3"/><path d="M1066.8 100.5 V113.5" stroke="#8a8886" stroke-width="1"/><path d="M1068.8 102.5 H1079.3 M1068.8 109.5 H1079.3" stroke="#2b7cd3" stroke-width="1.8"/><path d="M1068.8 105.5 H1073.8 M1068.8 112.5 H1073.8" stroke="#8a8886" stroke-width="1"/><rect x="1096.0" y="97.5" width="19" height="18" fill="#fafafa" stroke="#3b3a39" stroke-width="1.2"/><rect x="1096.0" y="97.5" width="19" height="3.2" fill="#c8c6c4" stroke="#3b3a39" stroke-width="1.2"/><line x1="1096.0" y1="105.6" x2="1115.0" y2="105.6" stroke="#3b3a39" stroke-width="0.96"/><line x1="1096.0" y1="110.6" x2="1115.0" y2="110.6" stroke="#3b3a39" stroke-width="0.96"/><line x1="1102.3" y1="100.7" x2="1102.3" y2="115.5" stroke="#3b3a39" stroke-width="0.96"/><line x1="1108.7" y1="100.7" x2="1108.7" y2="115.5" stroke="#3b3a39" stroke-width="0.96"/><rect x="1128.5" y="110.5" width="19" height="5" fill="#83beec"/><rect x="1141.2" y="100.7" width="6.3" height="14.8" fill="#83beec"/><rect x="1128.5" y="97.5" width="19" height="18" fill="none" stroke="#3b3a39" stroke-width="1.2"/><rect x="1128.5" y="97.5" width="19" height="3.2" fill="#c8c6c4" stroke="#3b3a39" stroke-width="1.2"/><line x1="1128.5" y1="105.6" x2="1147.5" y2="105.6" stroke="#3b3a39" stroke-width="0.96"/><line x1="1128.5" y1="110.6" x2="1147.5" y2="110.6" stroke="#3b3a39" stroke-width="0.96"/><line x1="1134.8" y1="100.7" x2="1134.8" y2="115.5" stroke="#3b3a39" stroke-width="0.96"/><line x1="1141.2" y1="100.7" x2="1141.2" y2="115.5" stroke="#3b3a39" stroke-width="0.96"/></svg>
<svg style="left:51px;top:777px;" width="1110" height="4" viewBox="0 0 1110 4"><line x1="0" y1="2" x2="1110" y2="2" stroke="#3b3a39" stroke-width="2" stroke-dasharray="2 2"/></svg>
<svg style="left:0px;top:0px;" width="1918" height="970" viewBox="0 0 1918 970"><line x1="415.5" y1="677.50" x2="1071" y2="677.50" stroke="#bebbb8" stroke-width="1" stroke-dasharray="1 3.33"/><line x1="415.5" y1="615.05" x2="1071" y2="615.05" stroke="#bebbb8" stroke-width="1" stroke-dasharray="1 3.33"/><line x1="415.5" y1="552.60" x2="1071" y2="552.60" stroke="#bebbb8" stroke-width="1" stroke-dasharray="1 3.33"/><line x1="415.5" y1="490.15" x2="1071" y2="490.15" stroke="#bebbb8" stroke-width="1" stroke-dasharray="1 3.33"/><line x1="415.5" y1="427.70" x2="1071" y2="427.70" stroke="#bebbb8" stroke-width="1" stroke-dasharray="1 3.33"/><line x1="415.5" y1="365.25" x2="1071" y2="365.25" stroke="#bebbb8" stroke-width="1" stroke-dasharray="1 3.33"/><line x1="415.5" y1="302.80" x2="1071" y2="302.80" stroke="#bebbb8" stroke-width="1" stroke-dasharray="1 3.33"/></svg>
<div style="left:463.1px;top:264.8px;width:90.9px;height:412.2px;background:#118DFF;"></div>
<div style="left:580.4px;top:369.1px;width:90.9px;height:307.9px;background:#118DFF;"></div>
<div style="left:697.7px;top:589.6px;width:90.9px;height:87.4px;background:#118DFF;"></div>
<div style="left:815.0px;top:617.0px;width:90.9px;height:60.0px;background:#118DFF;"></div>
<div style="left:932.3px;top:632.0px;width:90.9px;height:45.0px;background:#118DFF;"></div>
<span class="t" style="left:493.80px;top:249.00px;font-size:10px;color:#605e5c;transform:scaleX(1.0139);">66000</span>
<span class="t" style="left:611.30px;top:353.00px;font-size:10px;color:#605e5c;transform:scaleX(1.0175);">49300</span>
<span class="t" style="left:728.80px;top:574.00px;font-size:10px;color:#605e5c;transform:scaleX(1.0175);">14000</span>
<span class="t" style="left:849.30px;top:601.00px;font-size:10px;color:#605e5c;transform:scaleX(1.0202);">9600</span>
<span class="t" style="left:966.50px;top:616.00px;font-size:10px;color:#605e5c;transform:scaleX(1.0247);">7200</span>
<span class="t" style="left:395.60px;top:673.00px;font-size:10px;color:#605e5c;transform:scaleX(0.9563);">0K</span>
<span class="t" style="left:390.60px;top:610.00px;font-size:10px;color:#605e5c;transform:scaleX(0.9384);">10K</span>
<span class="t" style="left:390.60px;top:548.00px;font-size:10px;color:#605e5c;transform:scaleX(0.9384);">20K</span>
<span class="t" style="left:390.60px;top:485.00px;font-size:10px;color:#605e5c;transform:scaleX(0.9384);">30K</span>
<span class="t" style="left:390.60px;top:423.00px;font-size:10px;color:#605e5c;transform:scaleX(0.9384);">40K</span>
<span class="t" style="left:390.60px;top:360.00px;font-size:10px;color:#605e5c;transform:scaleX(0.9384);">50K</span>
<span class="t" style="left:390.60px;top:298.00px;font-size:10px;color:#605e5c;transform:scaleX(0.9384);">60K</span>
<span class="t" style="left:500.10px;top:683.00px;font-size:10px;color:#605e5c;transform:scaleX(0.9581);">USA</span>
<span class="t" style="left:613.80px;top:683.00px;font-size:10px;color:#605e5c;">China</span>
<span class="t" style="left:724.30px;top:683.00px;font-size:10px;color:#605e5c;">Germany</span>
<span class="t" style="left:850.80px;top:683.00px;font-size:10px;color:#605e5c;transform:scaleX(1.0375);">India</span>
<span class="t" style="left:966.80px;top:683.00px;font-size:10px;color:#605e5c;transform:scaleX(0.9794);">Brazil</span>
<span class="t sl" style="left:722.76px;top:697.00px;font-size:12px;color:#252423;transform:scaleX(1.0540);">Country</span>
<span class="t sl" style="left:383.06px;top:518.34px;font-size:12px;color:#252423;transform-origin:0.24px 10.16px;transform:rotate(-90deg) scaleX(0.9816);">Sum of GDP (Billion USD)</span>
<span class="t" style="left:371.42px;top:217.00px;font-size:14px;color:#252423;transform:scaleX(0.9947);">Sum of GDP (Billion USD) by Country</span>
<div style="left:367px;top:215px;width:711px;height:500px;border:1px solid #808080;"></div>
<div style="left:360.0px;top:208.0px;width:15px;height:15px;background:#fff;border:1px solid #808080;border-radius:8px;"></div>
<div style="left:715.0px;top:208.0px;width:15px;height:15px;background:#fff;border:1px solid #808080;border-radius:8px;"></div>
<div style="left:1070.0px;top:208.0px;width:15px;height:15px;background:#fff;border:1px solid #808080;border-radius:8px;"></div>
<div style="left:360.0px;top:458.0px;width:15px;height:15px;background:#fff;border:1px solid #808080;border-radius:8px;"></div>
<div style="left:1070.0px;top:458.0px;width:15px;height:15px;background:#fff;border:1px solid #808080;border-radius:8px;"></div>
<div style="left:360.0px;top:707.0px;width:15px;height:15px;background:#fff;border:1px solid #808080;border-radius:8px;"></div>
<div style="left:715.0px;top:707.0px;width:15px;height:15px;background:#fff;border:1px solid #808080;border-radius:8px;"></div>
<div style="left:1070.0px;top:707.0px;width:15px;height:15px;background:#fff;border:1px solid #808080;border-radius:8px;"></div>
<div style="left:322.5px;top:215.5px;width:34px;height:33.5px;background:#e6e4e2;border-radius:2px;box-shadow:0 1px 3px rgba(0,0,0,0.35);"></div>
<div style="left:322.5px;top:265.5px;width:34px;height:33.5px;background:#e6e4e2;border-radius:2px;box-shadow:0 1px 3px rgba(0,0,0,0.35);"></div>
<svg style="left:0px;top:0px;" width="1918" height="970" viewBox="0 0 1918 970"><path d="M17.2 170.5 V186.3 H33.5" fill="none" stroke="#201f1e" stroke-width="1.5"/><rect x="19.5" y="174.5" width="2.8" height="9.800000000000011" fill="#8a8886" stroke="#201f1e" stroke-width="1.2"/><rect x="24.3" y="176.8" width="2.8" height="7.5" fill="#8a8886" stroke="#201f1e" stroke-width="1.2"/><rect x="29.2" y="172.5" width="2.8" height="11.800000000000011" fill="#8a8886" stroke="#201f1e" stroke-width="1.2"/><rect x="15.7" y="219" width="19.3" height="17.6" fill="none" stroke="#7a7876" stroke-width="1.3"/><path d="M15.7 223.5 H35 M15.7 228 H35 M15.7 232.4 H35 M22 223.5 V236.6 M28.5 223.5 V236.6" stroke="#7a7876" stroke-width="1.1"/><g fill="#f3f2f1" stroke="#7a7876" stroke-width="1.3"><rect x="14.7" y="273.5" width="9" height="9.5"/><rect x="26.5" y="267.4" width="9.8" height="7.4"/><rect x="28" y="281" width="8.3" height="7.6"/></g><path d="M14.7 277 H23.7 M14.7 280 H23.7 M26.5 270.3 H36.3 M28 284 H36.3 M23.7 278 H26 V271 H26.5 M26 278 V285 H28" fill="none" stroke="#7a7876" stroke-width="1.1"/><path d="M19 329 V319 H26.5 L31.5 324 V329 M26.5 319 V324 H31.5" fill="none" stroke="#7a7876" stroke-width="1.2"/><path d="M33 327 Q35.5 333 31 337" fill="none" stroke="#7a7876" stroke-width="1.2"/><path d="M19 379.5 V369 H27 L32 374 V379.5 M27 369 V374 H32" fill="none" stroke="#7a7876" stroke-width="1.2"/><g fill="#e6e4e2" stroke="#3b3a39" stroke-width="1.4"><rect x="330" y="231" width="6.3" height="12"/><rect x="336.3" y="222" width="6.3" height="21"/><rect x="342.6" y="227" width="6.3" height="16"/></g><path d="M330 220 L337.5 220 L334.8 226 L338.5 226 L328 235.5 L331 228.5 L326.8 228.5 Z" fill="#f7c46c" stroke="#d9730d" stroke-width="1" stroke-linejoin="round"/><path d="M349 273 Q350.5 273.5 349.5 275.5 L341 286.5 L338.8 284.8 L347 273.7 Q348 272.5 349 273 Z" fill="#e6e4e2" stroke="#3b3a39" stroke-width="1.2"/><path d="M338.8 284.8 L341 286.5 Q340 291.5 328.5 289.8 Q334 288.5 335 285.5 Q336.5 283.5 338.8 284.8 Z" fill="#83beec" stroke="#2b7cd3" stroke-width="1.1" stroke-linejoin="round"/><path d="M346 286 V295 M341.5 290.5 H350.5" stroke="#2e8b45" stroke-width="1.6"/><path d="M983 192 H1001.3 L994.5 200.5 V208 H989.8 V200.5 Z" fill="none" stroke="#605e5c" stroke-width="1.3" stroke-linejoin="miter"/><path d="M1026 194.7 H1018.7 V207.5 H1035 V200" fill="none" stroke="#605e5c" stroke-width="1.3"/><path d="M1018.7 202 H1026.5 V207.5" fill="none" stroke="#605e5c" stroke-width="1.3"/><path d="M1028 201.5 L1034.8 194.7 M1029.5 194.5 H1035 V200" fill="none" stroke="#605e5c" stroke-width="1.3"/><circle cx="1053.3" cy="200" r="1.25" fill="#605e5c"/><circle cx="1061" cy="200" r="1.25" fill="#605e5c"/><circle cx="1068.7" cy="200" r="1.25" fill="#605e5c"/><path d="M1180.7 171.3 L1174.3 178 L1180.7 184.7 M1188.2 171.3 L1181.8 178 L1188.2 184.7" fill="none" stroke="#201f1e" stroke-width="1.5"/><path d="M1190.3 206.3 V219.3 L1183.5 215 H1178 V210.5 H1183.5 Z" fill="none" stroke="#201f1e" stroke-width="1.4" stroke-linejoin="miter"/></svg>
<span class="t sl" style="left:12.83px;top:332.00px;font-size:8.3px;color:#6e6c6a;transform:scaleX(0.9621);">DAX</span>
<span class="t sl" style="left:14.02px;top:381.00px;font-size:8.8px;color:#6e6c6a;transform:scaleX(0.9702);">TMDL</span>
<span class="t sb" style="left:1174.10px;top:215.07px;font-size:20px;color:#201f1e;transform-origin:0.40px 16.93px;transform:rotate(90deg) scaleX(0.9862);">Filters</span>
<div style="left:1201px;top:307px;width:226px;height:627px;background:#e1dfdd;"></div>
<div style="left:1201px;top:154px;width:1px;height:153px;background:#d8d6d4;"></div>
<div style="left:1211px;top:307px;width:207px;height:585px;background:#d6d4d2;border-radius:0 0 6px 6px;"></div>
<div style="left:1212px;top:307px;width:205px;height:584px;background:#f3f2f1;border-radius:0 0 5px 5px;"></div>
<div style="left:1211px;top:900px;width:207px;height:40px;background:#d6d4d2;border-radius:6px 6px 0 0;"></div>
<div style="left:1212px;top:901px;width:205px;height:40px;background:#f3f2f1;border-radius:5px 5px 0 0;"></div>
<div style="left:1201px;top:934px;width:226px;height:10px;background:#f3f2f1;"></div>
<div style="left:1420px;top:621.5px;width:6.5px;height:202px;background:#8a8886;border-radius:3.5px;"></div>
<svg style="left:0px;top:0px;" width="1918" height="970" viewBox="0 0 1918 970"><path d="M1214.5 308 L1228 306.5 L1262 305.5 L1299.5 305.8 L1299.8 326.5 L1288 328.5 L1287 333.5 L1232 333.8 L1215 331 Z" fill="#f4e800"/><path d="M1214.2 692 L1240 692.5 L1272 694.5 L1290 698.5 L1313 699.5 L1313 718.3 L1300 718.5 L1268 715.5 L1214.2 712 Z" fill="#f4e800"/></svg>
<span class="t hd" style="left:1212.12px;top:170.00px;font-size:19px;color:#201f1e;transform:scaleX(1.0841);">Format</span>
<div style="left:1212px;top:206px;width:205px;height:32.5px;background:#f3f2f1;border:1px solid #8a8886;border-radius:3px;"></div>
<span class="t" style="left:1248.15px;top:216.00px;font-size:17.3px;color:#605e5c;transform:scaleX(0.9379);">Search</span>
<span class="t sb" style="left:1216.64px;top:263.00px;font-size:18px;color:#201f1e;transform:scaleX(0.9774);">Visual</span>
<span class="t" style="left:1284.64px;top:263.00px;font-size:18px;color:#201f1e;transform:scaleX(0.9495);">Properties</span>
<div style="left:1217px;top:286.5px;width:47px;height:3px;background:#117865;"></div>
<span class="t sb" style="left:1242.71px;top:316.00px;font-size:14.6px;color:#201f1e;transform:scaleX(0.9857);">Value</span>
<div style="left:1366.7px;top:313px;width:40px;height:20px;background:#117865;border-radius:10px;"></div>
<div style="left:1390.3px;top:317.8px;width:10.4px;height:10.4px;background:#fff;border-radius:6px;"></div>
<span class="t sb" style="left:1372.27px;top:319.00px;font-size:11.5px;color:#fff;transform:scaleX(0.9825);">On</span>
<span class="t" style="left:1222.01px;top:351.00px;font-size:14.6px;color:#201f1e;transform:scaleX(0.9775);">Field</span>
<svg style="left:1222px;top:373px;" width="185" height="48" viewBox="0 0 185 48"><rect x="0.5" y="0.5" width="184" height="47" fill="none" stroke="#605e5c" stroke-width="1" stroke-dasharray="3 2.2"/></svg>
<div style="left:1228px;top:379px;width:172.5px;height:36.5px;background:#fafafa;border:1px solid #605e5c;border-radius:4px;"></div>
<span class="t" style="left:1236.01px;top:390.00px;font-size:14.6px;color:#201f1e;transform:scaleX(0.9750);">Sum of GDP (Bill...</span>
<div style="left:1364px;top:386.5px;width:1px;height:19.5px;background:#605e5c;"></div>
<span class="t" style="left:1222.01px;top:436.00px;font-size:14.6px;color:#201f1e;transform:scaleX(1.0078);">Font</span>
<div style="left:1222px;top:457px;width:113px;height:29.5px;background:#fff;border:1px solid #a19f9d;border-radius:3px;"></div>
<span class="t" style="left:1233.01px;top:466.00px;font-size:14.6px;color:#605e5c;transform:scaleX(0.9765);">Segoe UI</span>
<div style="left:1340px;top:457px;width:66.5px;height:29.5px;background:#fff;border:1px solid #a19f9d;border-radius:3px;"></div>
<span class="t" style="left:1345.51px;top:466.00px;font-size:14.6px;color:#605e5c;transform:scaleX(0.9145);">9</span>
<div style="left:1222px;top:492px;width:30px;height:28.5px;background:#fff;border:1px solid #c8c6c4;border-radius:3px;"></div>
<div style="left:1257px;top:492px;width:29px;height:28.5px;background:#fff;border:1px solid #c8c6c4;border-radius:3px;"></div>
<div style="left:1291px;top:492px;width:29.5px;height:28.5px;background:#fff;border:1px solid #c8c6c4;border-radius:3px;"></div>
<span class="t bd" style="left:1230.90px;top:495.00px;font-size:20px;color:#201f1e;transform:scaleX(0.9271);">B</span>
<span class="t sr" style="left:1267.58px;top:495.00px;font-size:21px;color:#201f1e;font-style:italic;transform:scaleX(1.0071);">I</span>
<span class="t" style="left:1298.61px;top:495.00px;font-size:19.5px;color:#201f1e;transform:scaleX(0.9916);">U</span>
<div style="left:1299px;top:514px;width:13px;height:1.3px;background:#201f1e;"></div>
<span class="t" style="left:1222.01px;top:540.00px;font-size:14.6px;color:#201f1e;transform:scaleX(1.0303);">Color</span>
<div style="left:1222px;top:561px;width:64.5px;height:29.5px;background:#fff;border:1px solid #c8c6c4;border-radius:3px;"></div>
<div style="left:1228px;top:566px;width:20px;height:20px;background:#605e5c;"></div>
<div style="left:1292px;top:561px;width:29.5px;height:29.5px;background:#fff;border:1px solid #c8c6c4;border-radius:3px;"></div>
<span class="t sr" style="left:1298.12px;top:566.00px;font-size:19px;color:#201f1e;font-style:italic;transform:scaleX(1.2720);">fx</span>
<span class="t" style="left:1222.01px;top:605.00px;font-size:14.6px;color:#201f1e;transform:scaleX(0.9745);">Transparency</span>
<div style="left:1222px;top:641px;width:68px;height:29.5px;background:#fff;border:1px solid #c8c6c4;border-radius:3px;"></div>
<span class="t" style="left:1228.21px;top:649.00px;font-size:14.6px;color:#605e5c;transform:scaleX(0.9831);">0 %</span>
<div style="left:1310px;top:654px;width:94px;height:4px;background:#e8e6e4;border-radius:2px;"></div>
<div style="left:1293.5px;top:645.5px;width:21px;height:21px;background:#fff;border:1.6px solid #4a4846;border-radius:11px;box-shadow:0 1px 2px rgba(0,0,0,0.25);"></div>
<span class="t" style="left:1222.01px;top:699.00px;font-size:14.6px;color:#33320a;transform:scaleX(1.0205);">Display units</span>
<svg style="left:0px;top:0px;" width="1918" height="970" viewBox="0 0 1918 970"><circle cx="1373.8" cy="177.8" r="1.15" fill="#201f1e"/><circle cx="1381.5" cy="177.8" r="1.15" fill="#201f1e"/><circle cx="1389.2" cy="177.8" r="1.15" fill="#201f1e"/><path d="M1402.0 170.8 L1408.5 177.8 L1402.0 184.8 M1409.3 170.8 L1415.8 177.8 L1409.3 184.8" fill="none" stroke="#201f1e" stroke-width="1.25"/><circle cx="1234" cy="220" r="5.3" fill="none" stroke="#605e5c" stroke-width="1.2"/><path d="M1230.2 224 L1222.3 231.8" stroke="#605e5c" stroke-width="1.2"/><circle cx="1389.0" cy="270.2" r="1.15" fill="#201f1e"/><circle cx="1396.7" cy="270.2" r="1.15" fill="#201f1e"/><circle cx="1404.4" cy="270.2" r="1.15" fill="#201f1e"/><path d="M1223 319.5 L1229.3 326 L1235.6 319.5" fill="none" stroke="#201f1e" stroke-width="1.5"/><path d="M1379.5 390.3 L1386.8 397.3 L1379.5 404.3" fill="none" stroke="#201f1e" stroke-width="1.4"/><path d="M1311.3 468.7 L1318.4 475.8 L1325.5 468.7" fill="none" stroke="#605e5c" stroke-width="1.3"/><path d="M1393 467.2 L1398 462.7 L1403 467.2 M1393 476.3 L1398 480.8 L1403 476.3" fill="none" stroke="#605e5c" stroke-width="1.1"/><path d="M1266 573.5 L1273.3 580.8 L1280.6 573.5" fill="none" stroke="#201f1e" stroke-width="1.4"/><path d="M1276 651.5 L1281 647 L1286 651.5 M1276 660.3 L1281 664.8 L1286 660.3" fill="none" stroke="#605e5c" stroke-width="1.1"/></svg>
<div style="left:1222px;top:750px;width:185px;height:211px;background:#fff;box-shadow:0 3px 10px rgba(0,0,0,0.28),0 0 2px rgba(0,0,0,0.18);"></div>
<div style="left:1222px;top:781px;width:185px;height:29.5px;background:#edebe9;"></div>
<div style="left:1222px;top:721px;width:185px;height:29.5px;background:#fff;border:1px solid #605e5c;border-radius:3px;"></div>
<span class="t" style="left:1233.01px;top:730.00px;font-size:14.6px;color:#605e5c;transform:scaleX(1.0441);">None</span>
<svg style="left:1383px;top:731px;" width="16" height="10" viewBox="0 0 16 10"><path d="M0.7 8.8 L7.7 1.5 L14.7 8.8" fill="none" stroke="#605e5c" stroke-width="1.3"/></svg>
<span class="t" style="left:1232.41px;top:760.00px;font-size:14.6px;color:#323130;transform:scaleX(1.0666);">Auto</span>
<span class="t" style="left:1232.41px;top:790.00px;font-size:14.6px;color:#323130;transform:scaleX(1.0470);">None</span>
<span class="t" style="left:1232.41px;top:820.00px;font-size:14.6px;color:#323130;transform:scaleX(0.9877);">Thousands</span>
<span class="t" style="left:1232.41px;top:850.00px;font-size:14.6px;color:#323130;transform:scaleX(1.0693);">Millions</span>
<span class="t" style="left:1232.41px;top:879.00px;font-size:14.6px;color:#323130;transform:scaleX(1.0172);">Billions</span>
<span class="t" style="left:1232.41px;top:909.00px;font-size:14.6px;color:#323130;transform:scaleX(1.0059);">Trillions</span>
<span class="t" style="left:1232.41px;top:939.00px;font-size:14.6px;color:#323130;transform:scaleX(1.0049);">Custom</span>
<span class="t hd" style="left:1438.32px;top:170.00px;font-size:19px;color:#201f1e;transform:scaleX(1.0710);">Build</span>
<span class="t" style="left:1438.21px;top:205.00px;font-size:14.6px;color:#201f1e;">Suggestions</span>
<div style="left:1438px;top:226px;width:205px;height:266.5px;background:#ffffff;border:1px solid #8a8886;border-radius:3px;"></div>
<div style="left:1542px;top:231px;width:30.5px;height:30px;background:#fff;border:1px solid #252423;"></div>
<div style="left:1646px;top:200.5px;width:6.5px;height:674px;background:#8a8886;border-radius:3.5px;"></div>
<svg style="left:0px;top:0px;" width="1918" height="970" viewBox="0 0 1918 970"><circle cx="1599.5" cy="177.8" r="1.15" fill="#201f1e"/><circle cx="1607.2" cy="177.8" r="1.15" fill="#201f1e"/><circle cx="1614.9" cy="177.8" r="1.15" fill="#201f1e"/><path d="M1628.5 170.8 L1635.0 177.8 L1628.5 184.8 M1635.8 170.8 L1642.3 177.8 L1635.8 184.8" fill="none" stroke="#201f1e" stroke-width="1.25"/><g transform="translate(1448.0 234.3) scale(1.13)"><rect x="1.5" y="2.5" width="4" height="5" fill="#ffffff" stroke="#3b3a39" stroke-width="1.2"/><rect x="5.5" y="2.5" width="7" height="5" fill="#83beec" stroke="#2b7cd3" stroke-width="1.2"/><rect x="1.5" y="11.0" width="7.5" height="5" fill="#ffffff" stroke="#3b3a39" stroke-width="1.2"/><rect x="9.0" y="11.0" width="8" height="5" fill="#c8c6c4" stroke="#8a8886" stroke-width="1.2"/><path d="M0.7 0 V19.3 H20" fill="none" stroke="#3b3a39" stroke-width="1.4"/></g><g transform="translate(1480.0 234.3) scale(1.13)"><rect x="3.5" y="12.0" width="5" height="7" fill="#ffffff" stroke="#3b3a39" stroke-width="1.2"/><rect x="3.5" y="6.0" width="5" height="6.5" fill="#83beec" stroke="#2b7cd3" stroke-width="1.2"/><rect x="12.0" y="9.5" width="5" height="9.5" fill="#ffffff" stroke="#3b3a39" stroke-width="1.2"/><rect x="12.0" y="2.5" width="5" height="7.5" fill="#c8c6c4" stroke="#8a8886" stroke-width="1.2"/><path d="M0.7 0 V19.3 H20" fill="none" stroke="#3b3a39" stroke-width="1.4"/></g><g transform="translate(1513.0 234.3) scale(1.13)"><rect x="1.5" y="1.5" width="17.5" height="4.5" fill="#83beec" stroke="#2b7cd3" stroke-width="1.2"/><rect x="1.5" y="6.0" width="10" height="4" fill="#ffffff" stroke="#3b3a39" stroke-width="1.2"/><rect x="1.5" y="10.5" width="10" height="4" fill="#c8c6c4" stroke="#8a8886" stroke-width="1.2"/><rect x="1.5" y="14.5" width="13.5" height="4" fill="#ffffff" stroke="#3b3a39" stroke-width="1.2"/><path d="M0.7 0 V19.3 H20" fill="none" stroke="#3b3a39" stroke-width="1.2"/></g><g transform="translate(1545.3 234.3) scale(1.13)"><rect x="2.5" y="1.5" width="4.5" height="17.5" fill="#83beec" stroke="#2b7cd3" stroke-width="1.2"/><rect x="7.0" y="9.0" width="4.5" height="10" fill="#ffffff" stroke="#3b3a39" stroke-width="1.2"/><rect x="11.0" y="12.0" width="4" height="7" fill="#c8c6c4" stroke="#8a8886" stroke-width="1.2"/><rect x="15.0" y="6.0" width="4" height="13" fill="#ffffff" stroke="#3b3a39" stroke-width="1.2"/><path d="M0 19.3 H20" stroke="#3b3a39" stroke-width="1.4"/></g><g transform="translate(1578.0 234.3) scale(1.13)"><rect x="1.5" y="2.5" width="4" height="5" fill="#ffffff" stroke="#3b3a39" stroke-width="1.2"/><rect x="5.5" y="2.5" width="12" height="5" fill="#83beec" stroke="#2b7cd3" stroke-width="1.2"/><rect x="1.5" y="11.0" width="10" height="5" fill="#ffffff" stroke="#3b3a39" stroke-width="1.2"/><rect x="11.5" y="11.0" width="6" height="5" fill="#c8c6c4" stroke="#8a8886" stroke-width="1.2"/><path d="M0.7 0 V19.3 H20" fill="none" stroke="#3b3a39" stroke-width="1.4"/></g><g transform="translate(1610.0 234.3) scale(1.13)"><rect x="3.5" y="14.0" width="5" height="5" fill="#ffffff" stroke="#3b3a39" stroke-width="1.2"/><rect x="3.5" y="2.5" width="5" height="11.5" fill="#83beec" stroke="#2b7cd3" stroke-width="1.2"/><rect x="12.0" y="8.5" width="5" height="10.5" fill="#ffffff" stroke="#3b3a39" stroke-width="1.2"/><rect x="12.0" y="2.5" width="5" height="6" fill="#c8c6c4" stroke="#8a8886" stroke-width="1.2"/><path d="M0.7 0 V19.3 H20" fill="none" stroke="#3b3a39" stroke-width="1.4"/></g><g transform="translate(1448.0 267.0) scale(1.13)"><path d="M1 16 L12.5 5 L19 10" fill="none" stroke="#2b7cd3" stroke-width="1.4"/><path d="M1 12.5 L8 5.5 L12.5 10 L19 4" fill="none" stroke="#3b3a39" stroke-width="1.4"/><path d="M0.7 0 V19.3 H20" fill="none" stroke="#3b3a39" stroke-width="1.4"/></g><g transform="translate(1480.0 267.0) scale(1.13)"><path d="M11 19 L15.5 1.5 L19.5 10 V19 Z" fill="#c8c6c4" stroke="#8a8886" stroke-width="1"/><path d="M0.7 11 L7 2.5 L16 15" fill="#ffffff" stroke="#3b3a39" stroke-width="1.3"/><path d="M0.7 12 L5 16.5 L11.5 8 L19.5 19.3 H0.7 Z" fill="#83beec" stroke="#2b7cd3" stroke-width="1.3" stroke-linejoin="round"/></g><g transform="translate(1513.0 267.0) scale(1.13)"><path d="M1 3 L7 9 L13 3 L19.5 7 V13 L13 8 L7 15 L1 9 Z" fill="#83beec" stroke="#2b7cd3" stroke-width="1.3" stroke-linejoin="round"/><path d="M0.7 0 V19.3 H20" fill="none" stroke="#8a8886" stroke-width="1.4"/></g><g transform="translate(1545.3 267.0) scale(1.13)"><path d="M1 2.5 H19.5 V14.5 L13.5 9 L7 15.5 L1 9.5 Z" fill="#83beec" stroke="#2b7cd3" stroke-width="1.3" stroke-linejoin="round"/><path d="M0.7 0 V19.3 H20" fill="none" stroke="#8a8886" stroke-width="1.4"/></g><g transform="translate(1578.0 267.0) scale(1.13)"><rect x="3.5" y="3.0" width="4.5" height="11" fill="#83beec" stroke="#2b7cd3" stroke-width="1.2"/><rect x="12.0" y="3.0" width="4.5" height="6" fill="#c8c6c4" stroke="#8a8886" stroke-width="1.2"/><rect x="3.5" y="14.0" width="4.5" height="5" fill="#ffffff" stroke="#3b3a39" stroke-width="1.2"/><rect x="12.0" y="9.0" width="4.5" height="10" fill="#ffffff" stroke="#3b3a39" stroke-width="1.2"/><path d="M1 17 L7 10.5 L12 15 L19.5 7.5" fill="none" stroke="#3b3a39" stroke-width="1.4"/><path d="M0.7 0 V19.3 H20" fill="none" stroke="#3b3a39" stroke-width="1.4"/></g><g transform="translate(1610.0 267.0) scale(1.13)"><rect x="3.5" y="9.5" width="4.5" height="9.5" fill="#83beec" stroke="#2b7cd3" stroke-width="1.2"/><rect x="8.0" y="2.5" width="4.5" height="16.5" fill="#ffffff" stroke="#3b3a39" stroke-width="1.2"/><rect x="12.5" y="6.0" width="4.5" height="13" fill="#c8c6c4" stroke="#8a8886" stroke-width="1.2"/><path d="M1 17 L7 10.5 L12 15 L19.5 7.5" fill="none" stroke="#3b3a39" stroke-width="1.4"/><path d="M0.7 0 V19.3 H20" fill="none" stroke="#3b3a39" stroke-width="1.4"/></g><g transform="translate(1448.0 299.5) scale(1.13)"><path d="M2 3.5 L10 8 L18.5 2.5 V7 L10 12.5 L2 8 Z" fill="#c8c6c4" stroke="#8a8886" stroke-width="1"/><path d="M2 10.5 H18.5 V17.5 H2 Z" fill="#f7c46c" stroke="#d9730d" stroke-width="1.2"/><path d="M2 9 Q6 9 9 13.5 T18.5 10.5 V14 Q14 19 10 16.5 T2 12.5 Z" fill="#83beec" stroke="#2b7cd3" stroke-width="1.2"/><path d="M0.7 0 V19.3 H20" fill="none" stroke="#3b3a39" stroke-width="1.4"/></g><g transform="translate(1480.0 299.5) scale(1.13)"><rect x="2.5" y="5.0" width="3.5" height="14" fill="#ffffff" stroke="#3b3a39" stroke-width="1.2"/><rect x="6.0" y="5.0" width="3.5" height="7" fill="#c8c6c4" stroke="#8a8886" stroke-width="1.2"/><rect x="9.5" y="1.5" width="3" height="10.5" fill="#83beec" stroke="#2b7cd3" stroke-width="1.2"/><rect x="12.5" y="1.5" width="4" height="17.5" fill="#ffffff" stroke="#3b3a39" stroke-width="1.2"/><path d="M0.7 0 V19.3 H20" fill="none" stroke="#3b3a39" stroke-width="1.4"/></g><g transform="translate(1513.0 299.5) scale(1.13)"><rect x="0.8" y="1.5" width="18.5" height="5.5" fill="#83beec" stroke="#2b7cd3" stroke-width="1.2"/><rect x="3.0" y="7.0" width="14" height="5.5" fill="#83beec" stroke="#2b7cd3" stroke-width="1.2"/><rect x="6.0" y="12.5" width="8" height="5.5" fill="#83beec" stroke="#2b7cd3" stroke-width="1.2"/></g><g transform="translate(1545.3 299.5) scale(1.13)"><path d="M0.7 0 V19.3 H20" fill="none" stroke="#3b3a39" stroke-width="1.4"/><rect x="3.5" y="5" width="3.3" height="3.3" fill="#83beec"/><rect x="9" y="8.5" width="3.3" height="3.3" fill="#83beec"/><rect x="14.5" y="13" width="3.3" height="3.3" fill="#83beec"/><rect x="14.5" y="1.5" width="3.3" height="3.3" fill="#3b3a39"/><rect x="3.5" y="13.5" width="3.3" height="3.3" fill="#3b3a39"/></g><g transform="translate(1578.0 299.5) scale(1.13)"><circle cx="10" cy="10" r="9.3" fill="#ffffff" stroke="#3b3a39" stroke-width="1.3"/><path d="M10 0.7 A9.3 9.3 0 0 1 16.6 16.6 L10 10 Z" fill="#83beec" stroke="#2b7cd3" stroke-width="1.3" stroke-linejoin="round"/></g><g transform="translate(1610.0 299.5) scale(1.13)"><circle cx="10" cy="10" r="7" fill="none" stroke="#83beec" stroke-width="4.5"/><circle cx="10" cy="10" r="9.3" fill="none" stroke="#2b7cd3" stroke-width="1.3"/><circle cx="10" cy="10" r="4.6" fill="#ffffff" stroke="#2b7cd3" stroke-width="1.3"/><path d="M10 0.7 A9.3 9.3 0 0 0 0.8 8.5 L5.5 9.2 A4.6 4.6 0 0 1 10 5.4 Z" fill="#ffffff" stroke="#8a8886" stroke-width="1.1"/></g><g transform="translate(1448.0 332.3) scale(1.13)"><rect x="0.7" y="0.7" width="9.5" height="9.5" fill="#83beec" stroke="#2b7cd3" stroke-width="1.2"/><rect x="0.7" y="10.2" width="9.5" height="9" fill="#83beec" stroke="#2b7cd3" stroke-width="1.2"/><rect x="10.2" y="0.7" width="9" height="6.5" fill="#ffffff" stroke="#8a8886" stroke-width="1.2"/><rect x="10.2" y="7.2" width="4" height="12" fill="#ffffff" stroke="#8a8886" stroke-width="1.2"/><rect x="14.2" y="7.2" width="5" height="6" fill="#ffffff" stroke="#8a8886" stroke-width="1.2"/><rect x="14.2" y="13.2" width="5" height="6" fill="#ffffff" stroke="#8a8886" stroke-width="1.2"/></g><g transform="translate(1480.0 332.3) scale(1.15)"><circle cx="10.5" cy="9" r="6" fill="#ffffff" stroke="#3b3a39" stroke-width="1.2"/><path d="M7 5.5 Q9.5 4 10 7 Q8 9.5 6.5 8 Z M11 9.5 Q15 8 14 12 Q12 14.5 11 12 Z M12 4 L14.5 6 L12.5 6.5 Z" fill="#2e8b45"/><path d="M9 0.8 A8.5 8.5 0 1 0 17 14.5" fill="none" stroke="#3b3a39" stroke-width="1.3"/><path d="M10.5 17.3 V19.3 M4.5 19.4 H16.5" stroke="#3b3a39" stroke-width="1.3"/></g><g transform="translate(1513.0 332.3) scale(1.13)"><path d="M1 2 L6 1.5 L8 3.5 L13 1.5 L19 2 L19.5 9 L18 14 L13.5 16.5 L10 19 L8.5 15.5 L4 15 L1 10 Z" fill="#c8c6c4" stroke="#3b3a39" stroke-width="1.1" stroke-linejoin="round"/><path d="M1 2 L6 1.5 L8 3.5 L9.5 9 L4 9.5 L1.3 9.8 Z" fill="#83beec" stroke="#2b7cd3" stroke-width="1"/><path d="M11.5 10 L19.4 9.3 L18 14 L13.5 16.5 L10 19 L9.5 14.5 Z" fill="#83beec" stroke="#2b7cd3" stroke-width="1"/></g><g transform="translate(1545.3 332.3) scale(1.13)"><path d="M1 2 L6 1.5 L8 3.5 L13 1.5 L19 2 L19.5 9 L18 14 L13.5 16.5 L10 19 L8.5 15.5 L4 15 L1 10 Z" fill="#ffffff" stroke="#3b3a39" stroke-width="1.1" stroke-linejoin="round"/><path d="M1 2 L6 1.5 L8 3.5 L9.5 9 L1.3 9.8 M9.5 9 L11.5 10 L19.4 9.3 M11.5 10 L9.5 14.5 L10 19" fill="none" stroke="#2b7cd3" stroke-width="1.1"/></g><g transform="translate(1581.0 331.3) scale(1.0)"><path d="M13 0 L5.5 19 L14.5 13.5 Z" fill="#3ba0d6"/><path d="M13 0 L14.5 13.5 L17.5 21.5 Z" fill="#1f86d8"/><path d="M5.5 19 L0.5 19.5 L8 12 Z" fill="#36a3dc"/><path d="M13 0 L8 12 L5.5 19 L14.5 13.5 Z" fill="#2e9bd6"/><path d="M14.5 13.5 L17.5 21.5 L10.5 16 Z" fill="#0f78d4"/></g><g transform="translate(1610.0 333.3) scale(1.13)"><path d="M0.8 14.5 A9.5 9.5 0 0 1 19.5 14.5 H15.5 A5.5 5.5 0 0 0 4.8 14.5 Z" fill="#ffffff" stroke="#3b3a39" stroke-width="1.2" stroke-linejoin="round"/><path d="M6 6.5 A9.5 9.5 0 0 1 19.5 14.5 H15.5 A5.5 5.5 0 0 0 8 10 Z" fill="#83beec" stroke="#2b7cd3" stroke-width="1.2" stroke-linejoin="round"/><path d="M9.5 14 L14 9.5" stroke="#3b3a39" stroke-width="1.8"/><circle cx="9.7" cy="13.8" r="1.4" fill="#3b3a39"/></g><g transform="translate(1448.0 364.8) scale(1.13)"><rect x="0.7" y="3.5" width="19" height="14.5" fill="#ffffff" stroke="#3b3a39" stroke-width="1.3"/><path d="M3 15.5 H17.5" stroke="#8a8886" stroke-width="1"/><text x="10.2" y="13.2" font-family="Liberation Sans,sans-serif" font-size="9.5" text-anchor="middle" fill="#2b7cd3" textLength="14" lengthAdjust="spacingAndGlyphs">123</text></g><g transform="translate(1480.0 364.8) scale(1.13)"><rect x="0.7" y="1" width="19" height="18.5" fill="#ffffff" stroke="#3b3a39" stroke-width="1.3"/><path d="M4 4 V17" stroke="#8a8886" stroke-width="1"/><path d="M6 6 H16.5 M6 13 H16.5" stroke="#2b7cd3" stroke-width="1.8"/><path d="M6 9 H11 M6 16 H11" stroke="#8a8886" stroke-width="1"/></g><g transform="translate(1513.0 364.8) scale(1.13)"><rect x="0.7" y="2.5" width="19" height="15.5" fill="#ffffff" stroke="#3b3a39" stroke-width="1.3"/><path d="M3 11.5 L6.8 5.5 L10.5 11.5 Z" fill="#4fa85a" stroke="#2e8b45" stroke-width="0.8"/><path d="M10.8 5.5 H17.5 L14.2 11.5 Z" fill="#e8505b" stroke="#c4262e" stroke-width="0.8"/><path d="M3 14.8 H17.5" stroke="#8a8886" stroke-width="1"/></g><g transform="translate(1545.3 364.8) scale(1.13)"><rect x="0.7" y="1" width="19" height="17.5" fill="#ffffff" stroke="#3b3a39" stroke-width="1.3"/><rect x="0.7" y="1" width="19" height="3" fill="#c8c6c4" stroke="#3b3a39" stroke-width="1.1"/><rect x="4" y="7.5" width="3.3" height="3.3" fill="#c8c6c4" stroke="#8a8886" stroke-width="0.9"/><rect x="4" y="13" width="3.3" height="3.3" fill="#c8c6c4" stroke="#8a8886" stroke-width="0.9"/><rect x="9" y="9" width="12.5" height="12" fill="#ffffff"/><path d="M9.8 9.8 H20.8 L16.8 14.8 V20.3 H13.8 V14.8 Z" fill="#ffffff" stroke="#3b3a39" stroke-width="1.3" stroke-linejoin="round"/></g><g transform="translate(1578.0 364.8) scale(1.13)"><rect x="0.7" y="1" width="19" height="18" fill="#ffffff" stroke="#3b3a39" stroke-width="1.2"/><rect x="0.7" y="1" width="19" height="3.2" fill="#c8c6c4" stroke="#3b3a39" stroke-width="1.2"/><line x1="0.7" y1="9.1" x2="19.7" y2="9.1" stroke="#3b3a39" stroke-width="0.96"/><line x1="0.7" y1="14.1" x2="19.7" y2="14.1" stroke="#3b3a39" stroke-width="0.96"/><line x1="7.0" y1="4.2" x2="7.0" y2="19" stroke="#3b3a39" stroke-width="0.96"/><line x1="13.4" y1="4.2" x2="13.4" y2="19" stroke="#3b3a39" stroke-width="0.96"/></g><g transform="translate(1610.0 364.8) scale(1.13)"><rect x="0.7" y="14" width="19" height="5" fill="#83beec"/><rect x="13.4" y="4.2" width="6.3" height="14.8" fill="#83beec"/><rect x="0.7" y="1" width="19" height="18" fill="none" stroke="#3b3a39" stroke-width="1.2"/><rect x="0.7" y="1" width="19" height="3.2" fill="#c8c6c4" stroke="#3b3a39" stroke-width="1.2"/><line x1="0.7" y1="9.1" x2="19.7" y2="9.1" stroke="#3b3a39" stroke-width="0.96"/><line x1="0.7" y1="14.1" x2="19.7" y2="14.1" stroke="#3b3a39" stroke-width="0.96"/><line x1="7.0" y1="4.2" x2="7.0" y2="19" stroke="#3b3a39" stroke-width="0.96"/><line x1="13.4" y1="4.2" x2="13.4" y2="19" stroke="#3b3a39" stroke-width="0.96"/></g><g transform="translate(1513.0 397.0) scale(1.13)"><path d="M0.7 0 V19.3 H20" fill="none" stroke="#3b3a39" stroke-width="1.3"/><path d="M1.5 4 H14.5" stroke="#2b7cd3" stroke-width="1.2"/><circle cx="16.5" cy="4" r="2.4" fill="#83beec" stroke="#2b7cd3" stroke-width="1.1"/><path d="M1.5 9.5 H10.5 M1.5 14.5 H6.5" stroke="#3b3a39" stroke-width="1.1"/><rect x="10.8" y="8.2" width="2.6" height="2.6" fill="#c8c6c4" stroke="#8a8886" stroke-width="0.9"/><rect x="6.8" y="13.2" width="2.6" height="2.6" fill="#c8c6c4" stroke="#8a8886" stroke-width="0.9"/></g><g transform="translate(1545.3 397.0) scale(1.13)"><path d="M7 9.5 H10 M10 3 V16.5 M10 3 H12.5 M10 9.5 H12.5 M10 16.5 H12.5" fill="none" stroke="#3b3a39" stroke-width="1.2"/><rect x="0.7" y="7.5" width="6.5" height="4" fill="#83beec" stroke="#2b7cd3" stroke-width="1.2"/><rect x="12.8" y="0.8" width="6.5" height="4" fill="#83beec" stroke="#2b7cd3" stroke-width="1.2"/><rect x="12.8" y="7.5" width="6.5" height="4" fill="#83beec" stroke="#2b7cd3" stroke-width="1.2"/><rect x="12.8" y="14.2" width="6.5" height="4" fill="#83beec" stroke="#2b7cd3" stroke-width="1.2"/></g><g transform="translate(1578.0 397.0) scale(1.13)"><path d="M1 1.5 H19.5 V14 H8.5 L4 18.5 V14 H1 Z" fill="#ffffff" stroke="#2b7cd3" stroke-width="1.4" stroke-linejoin="miter"/></g><g transform="translate(1610.0 397.0) scale(1.13)"><path d="M3 0.8 H12.5 L17.5 5.8 V19.3 H3 Z" fill="#ffffff" stroke="#3b3a39" stroke-width="1.2"/><path d="M12.5 0.8 V5.8 H17.5" fill="none" stroke="#3b3a39" stroke-width="1.1"/><circle cx="3.2" cy="8" r="1.9" fill="#ffffff" stroke="#2b7cd3" stroke-width="1.1"/><path d="M6 9.5 H14.5 M6 13 H11.5" stroke="#83beec" stroke-width="1.2"/></g><g transform="translate(1448.0 429.5) scale(1.13)"><path d="M4.5 2 H15.5 V8 Q15.5 13 10 13.5 Q4.5 13 4.5 8 Z" fill="#ffffff" stroke="#3b3a39" stroke-width="1.3"/><path d="M4.5 4 H1.5 Q1.5 9 5 10 M15.5 4 H18.5 Q18.5 9 15 10" fill="none" stroke="#3b3a39" stroke-width="1.2"/><path d="M8.5 13.5 L7 17.5 H13 L11.5 13.5" fill="#ffffff" stroke="#3b3a39" stroke-width="1.2"/><rect x="5.0" y="0.8" width="10" height="2.2" fill="#83beec" stroke="#2b7cd3" stroke-width="1.2"/><rect x="4.5" y="17.5" width="11" height="2" fill="#83beec" stroke="#2b7cd3" stroke-width="1.2"/></g><g transform="translate(1480.0 429.5) scale(1.13)"><path d="M2.5 0.8 H12 L17.5 6.3 V20 H2.5 Z" fill="#ffffff" stroke="#3b3a39" stroke-width="1.3"/><path d="M12 0.8 V6.3 H17.5" fill="none" stroke="#3b3a39" stroke-width="1.1"/><rect x="5" y="12.5" width="2.3" height="5" fill="#3b3a39"/><rect x="8.8" y="14.5" width="2.3" height="3" fill="#3b3a39"/><rect x="12.6" y="9.5" width="2.3" height="8" fill="#3b3a39"/></g><g transform="translate(1513.0 429.5) scale(1.13)"><rect x="2" y="3.5" width="17.5" height="14.5" fill="#ffffff" stroke="#3b3a39" stroke-width="1.2"/><path d="M4 15.5 H17.5" stroke="#8a8886" stroke-width="1"/><text x="11.5" y="13.5" font-family="Liberation Sans,sans-serif" font-size="9" text-anchor="middle" fill="#2b7cd3" textLength="12.5" lengthAdjust="spacingAndGlyphs">123</text><path d="M3.5 -0.5 L10 -0.5 L7.6 5 L11 5 L1.5 13 L4.2 7 L0.5 7 Z" fill="#f7c46c" stroke="#d9730d" stroke-width="1" stroke-linejoin="round"/></g><g transform="translate(1545.3 429.5) scale(1.13)"><rect x="11" y="1.5" width="7" height="7" fill="#ffffff" stroke="#8a8886" stroke-width="1"/><rect x="2.5" y="10.5" width="7" height="7" fill="#ffffff" stroke="#8a8886" stroke-width="1"/><rect x="6" y="5" width="4" height="4" fill="#2b7cd3"/><path d="M10.2 10.5 H21.2 L17.2 15.5 V21.0 H14.2 V15.5 Z" fill="#ffffff" stroke="#3b3a39" stroke-width="1.3" stroke-linejoin="round"/><path d="M3.5 -0.5 L10 -0.5 L7.6 5 L11 5 L1.5 13 L4.2 7 L0.5 7 Z" fill="#f7c46c" stroke="#d9730d" stroke-width="1" stroke-linejoin="round"/></g><g transform="translate(1578.0 429.5) scale(1.13)"><path d="M10 1.5 H19 V10 M8 18.5 H2 V11" fill="none" stroke="#3b3a39" stroke-width="1.1"/><path d="M6.5 15.5 L9.8 6.5 L13 15.5" fill="none" stroke="#83beec" stroke-width="1.2"/><path d="M10.2 10.5 H21.2 L17.2 15.5 V21.0 H14.2 V15.5 Z" fill="#ffffff" stroke="#3b3a39" stroke-width="1.3" stroke-linejoin="round"/><path d="M3.5 -0.5 L10 -0.5 L7.6 5 L11 5 L1.5 13 L4.2 7 L0.5 7 Z" fill="#f7c46c" stroke="#d9730d" stroke-width="1" stroke-linejoin="round"/></g><g transform="translate(1610.0 429.5) scale(1.13)"><path d="M10 1.5 H19 V10 M8 18.5 H2 V11" fill="none" stroke="#3b3a39" stroke-width="1.1"/><path d="M8 6.5 H16" stroke="#8a8886" stroke-width="1.1"/><rect x="4.5" y="11.5" width="2" height="2" fill="none" stroke="#8a8886" stroke-width="0.8"/><path d="M10.2 10.5 H21.2 L17.2 15.5 V21.0 H14.2 V15.5 Z" fill="#ffffff" stroke="#3b3a39" stroke-width="1.3" stroke-linejoin="round"/><path d="M3.5 -0.5 L10 -0.5 L7.6 5 L11 5 L1.5 13 L4.2 7 L0.5 7 Z" fill="#f7c46c" stroke="#d9730d" stroke-width="1" stroke-linejoin="round"/></g><g transform="translate(1448.0 462.0) scale(1.13)"><path d="M6 1.5 H19 V19 H1.5 V9" fill="#ffffff" stroke="#2b7cd3" stroke-width="1.4"/><path d="M18 3 H12.5 L11 6.5 L8 7 L8.5 11 L6 12.5 L6.5 17.5 L10.5 16.5 L12 12.5 L15 11.5 L15.5 7.5 L18 6.5 Z" fill="#83beec" stroke="#2b7cd3" stroke-width="0.8"/><path d="M0 1.5 Q0 -0.8 2.8 -0.8 Q5.6 -0.8 5.6 1.5 V6.5 L2.8 9.5 L0 6.5 Z" fill="#d9730d"/><circle cx="2.8" cy="2.3" r="1" fill="#fff"/><circle cx="16.5" cy="16.5" r="2.8" fill="#d9730d"/><circle cx="18.5" cy="10.5" r="1.6" fill="#d9730d"/></g><g transform="translate(1480.0 462.0) scale(1.13)"><path d="M0.8 9.5 L7.5 1 Q8.5 0 9.5 1 L16 9.5 L9.5 18 Q8.5 19 7.5 18 Z" fill="#ffffff" stroke="#9b2fae" stroke-width="1.2"/><path d="M4.5 9.5 L11.2 1 Q12.2 0 13.2 1 L19.8 9.5 L13.2 18 Q12.2 19 11.2 18 Z" fill="none" stroke="#9b2fae" stroke-width="1.2"/><path d="M8 5 L14.5 13.5 M14.5 5.5 L8 14" stroke="#9b2fae" stroke-width="1"/></g><g transform="translate(1513.0 462.0) scale(1.13)"><path d="M1 1.5 H13 L19.5 9.5 L13 17.5 H1 L7.5 9.5 Z" fill="#ffffff" stroke="#0b6ddb" stroke-width="1.3" stroke-linejoin="round"/><path d="M13 1.5 L3.5 14 M16 5.5 L7.5 17" stroke="#0b6ddb" stroke-width="1.1"/></g><circle cx="1549.0" cy="471.2" r="1.15" fill="#201f1e"/><circle cx="1556.7" cy="471.2" r="1.15" fill="#201f1e"/><circle cx="1564.4" cy="471.2" r="1.15" fill="#201f1e"/></svg>
<span class="t bd" style="left:1452.14px;top:401.00px;font-size:18px;color:#2b7cd3;transform:scaleX(0.9385);">R</span>
<span class="t bd" style="left:1479.13px;top:399.00px;font-size:18.5px;color:#2b7cd3;transform:scaleX(1.0567);">Py</span>
<span class="t" style="left:1437.71px;top:507.00px;font-size:14.6px;color:#201f1e;transform:scaleX(0.9725);">X-axis</span>
<svg style="left:1438px;top:528px;" width="205" height="91" viewBox="0 0 205 91"><rect x="0.5" y="0.5" width="204" height="90" fill="none" stroke="#605e5c" stroke-width="1" stroke-dasharray="3 2.2"/></svg>
<div style="left:1444px;top:534px;width:193px;height:36.5px;background:#fafafa;border:1px solid #605e5c;border-radius:4px;"></div>
<span class="t" style="left:1451.71px;top:546.00px;font-size:14.6px;color:#201f1e;transform:scaleX(1.0258);">Country</span>
<svg style="left:1573px;top:542.5px;" width="56" height="21" viewBox="0 0 56 21"><path d="M1.8 3 L16.2 17.5 M16.2 3 L1.8 17.5" stroke="#201f1e" stroke-width="1.5"/><path d="M27.5 1 V20.5" stroke="#201f1e" stroke-width="1"/><path d="M44 3.5 L51 10.5 L44 17.5" fill="none" stroke="#201f1e" stroke-width="1.4"/></svg>
<div style="left:1444px;top:576.5px;width:193px;height:36.5px;background:#ffffff;border:1px solid #605e5c;border-radius:3px;"></div>
<span class="t sb" style="left:1505.21px;top:588.00px;font-size:14.6px;color:#201f1e;transform:scaleX(1.0713);">+Add data</span>
<span class="t" style="left:1437.71px;top:633.00px;font-size:14.6px;color:#201f1e;transform:scaleX(0.9875);">Y-axis</span>
<svg style="left:1438px;top:654px;" width="205" height="91" viewBox="0 0 205 91"><rect x="0.5" y="0.5" width="204" height="90" fill="none" stroke="#605e5c" stroke-width="1" stroke-dasharray="3 2.2"/></svg>
<div style="left:1444px;top:660px;width:193px;height:36.5px;background:#fafafa;border:1px solid #605e5c;border-radius:4px;"></div>
<span class="t" style="left:1451.71px;top:672.00px;font-size:14.6px;color:#201f1e;transform:scaleX(0.9712);">Sum of GDP (B...</span>
<svg style="left:1573px;top:668.5px;" width="56" height="21" viewBox="0 0 56 21"><path d="M1.8 3 L16.2 17.5 M16.2 3 L1.8 17.5" stroke="#201f1e" stroke-width="1.5"/><path d="M27.5 1 V20.5" stroke="#201f1e" stroke-width="1"/><path d="M44 3.5 L51 10.5 L44 17.5" fill="none" stroke="#201f1e" stroke-width="1.4"/></svg>
<div style="left:1444px;top:702px;width:193px;height:36.5px;background:#ffffff;border:1px solid #605e5c;border-radius:3px;"></div>
<span class="t sb" style="left:1505.21px;top:714.00px;font-size:14.6px;color:#201f1e;transform:scaleX(1.0713);">+Add data</span>
<span class="t" style="left:1438.21px;top:758.00px;font-size:14.6px;color:#201f1e;transform:scaleX(0.9862);">Legend</span>
<svg style="left:1438px;top:780px;" width="205" height="49" viewBox="0 0 205 49"><rect x="0.5" y="0.5" width="204" height="48" fill="none" stroke="#605e5c" stroke-width="1" stroke-dasharray="3 2.2"/></svg>
<div style="left:1444px;top:786px;width:193px;height:36.5px;background:#ffffff;border:1px solid #605e5c;border-radius:3px;"></div>
<span class="t sb" style="left:1505.21px;top:798.00px;font-size:14.6px;color:#201f1e;transform:scaleX(1.0713);">+Add data</span>
<span class="t" style="left:1438.21px;top:843.00px;font-size:14.6px;color:#201f1e;transform:scaleX(1.0264);">Small multiples</span>
<svg style="left:1438px;top:864px;" width="205" height="49" viewBox="0 0 205 49"><rect x="0.5" y="0.5" width="204" height="48" fill="none" stroke="#605e5c" stroke-width="1" stroke-dasharray="3 2.2"/></svg>
<div style="left:1444px;top:870.5px;width:193px;height:36.5px;background:#ffffff;border:1px solid #605e5c;border-radius:3px;"></div>
<span class="t sb" style="left:1505.21px;top:882.00px;font-size:14.6px;color:#201f1e;transform:scaleX(1.0713);">+Add data</span>
<div style="left:1436px;top:920px;width:205px;height:14px;overflow:hidden"><span class="t" style="left:1.8px;top:5.6px;font-size:14.6px;color:#201f1e;transform:scaleX(0.93)">Tooltips</span></div>
<span class="t hd" style="left:1664.32px;top:169.00px;font-size:19px;color:#201f1e;transform:scaleX(1.0476);">Data</span>
<div style="left:1659.5px;top:211px;width:214px;height:29.5px;background:#fff;border:1px solid #d1d1d1;border-radius:5px;border-bottom:1px solid #8a8886;"></div>
<span class="t" style="left:1701.95px;top:220.00px;font-size:17.3px;color:#605e5c;transform:scaleX(0.9306);">Search</span>
<div style="left:1864px;top:251px;width:9.7px;height:104.8px;background:#8a8886;"></div>
<span class="t" style="left:1713.11px;top:261.00px;font-size:14.6px;color:#201f1e;transform:scaleX(0.9932);">Ashishdata</span>
<span class="t" style="left:1713.11px;top:291.00px;font-size:14.6px;color:#201f1e;">Branch details</span>
<span class="t" style="left:1713.11px;top:321.00px;font-size:14.6px;color:#201f1e;transform:scaleX(0.9925);">Calculated Table</span>
<span class="t" style="left:1713.11px;top:351.00px;font-size:14.6px;color:#201f1e;transform:scaleX(0.9132);">Class</span>
<span class="t" style="left:1713.11px;top:381.00px;font-size:14.6px;color:#201f1e;">Countries</span>
<span class="t" style="left:1756.71px;top:411.00px;font-size:14.6px;color:#201f1e;transform:scaleX(0.9940);">Area (sq km)</span>
<span class="t" style="left:1756.71px;top:441.00px;font-size:14.6px;color:#201f1e;transform:scaleX(1.0317);">Country</span>
<span class="t" style="left:1756.71px;top:471.00px;font-size:14.6px;color:#201f1e;transform:scaleX(0.9808);">GDP (Billion U...</span>
<span class="t" style="left:1756.71px;top:501.00px;font-size:14.6px;color:#201f1e;transform:scaleX(0.9707);">Literacy Rate (...</span>
<span class="t" style="left:1756.71px;top:531.00px;font-size:14.6px;color:#201f1e;transform:scaleX(1.0226);">Population (M...</span>
<span class="t" style="left:1756.71px;top:561.00px;font-size:14.6px;color:#201f1e;transform:scaleX(0.9400);">Year</span>
<span class="t" style="left:1713.11px;top:591.00px;font-size:14.6px;color:#201f1e;transform:scaleX(0.9949);">Countries Average T...</span>
<span class="t" style="left:1713.11px;top:621.00px;font-size:14.6px;color:#201f1e;transform:scaleX(1.0420);">Countrylist</span>
<span class="t" style="left:1713.11px;top:651.00px;font-size:14.6px;color:#201f1e;">Customers</span>
<span class="t" style="left:1713.11px;top:681.00px;font-size:14.6px;color:#201f1e;">CustomersData</span>
<span class="t" style="left:1713.11px;top:711.00px;font-size:14.6px;color:#201f1e;transform:scaleX(0.9712);">Data1</span>
<span class="t" style="left:1713.11px;top:741.00px;font-size:14.6px;color:#201f1e;transform:scaleX(0.9840);">Data2</span>
<span class="t" style="left:1713.11px;top:771.00px;font-size:14.6px;color:#201f1e;transform:scaleX(0.9142);">DATESBETWEEN Table</span>
<span class="t" style="left:1713.11px;top:801.00px;font-size:14.6px;color:#201f1e;transform:scaleX(0.9332);">DATESINPERIOD Table</span>
<span class="t" style="left:1713.11px;top:831.00px;font-size:14.6px;color:#201f1e;transform:scaleX(0.9530);">DATESMTD Table</span>
<span class="t" style="left:1713.11px;top:861.00px;font-size:14.6px;color:#201f1e;transform:scaleX(1.0951);">df</span>
<span class="t" style="left:1713.11px;top:891.00px;font-size:14.6px;color:#201f1e;transform:scaleX(0.9577);">DISTINCT Values Table</span>
<span class="t" style="left:1713.11px;top:921.00px;font-size:14.6px;color:#201f1e;transform:scaleX(1.0056);">Filtered Table</span>
<div style="left:1880px;top:154.5px;width:38px;height:39px;background:#e6e6e6;border:1px solid #8a8886;"></div>
<div style="left:1880px;top:194.3px;width:38px;height:39.3px;background:#e6e6e6;border:1px solid #8a8886;"></div>
<div style="left:1880px;top:235px;width:38px;height:38.3px;background:#e6e6e6;border:1px solid #8a8886;"></div>
<div style="left:1880px;top:904px;width:38px;height:1px;background:#e1dfdd;"></div>
<svg style="left:0px;top:0px;" width="1918" height="970" viewBox="0 0 1918 970"><circle cx="1826.0" cy="177.6" r="1.15" fill="#201f1e"/><circle cx="1833.7" cy="177.6" r="1.15" fill="#201f1e"/><circle cx="1841.4" cy="177.6" r="1.15" fill="#201f1e"/><path d="M1854.5 170.8 L1861.0 177.8 L1854.5 184.8 M1861.8 170.8 L1868.3 177.8 L1861.8 184.8" fill="none" stroke="#201f1e" stroke-width="1.25"/><circle cx="1681.5" cy="224" r="6" fill="none" stroke="#605e5c" stroke-width="1.2"/><path d="M1685.8 228.5 L1691.5 234.5" stroke="#605e5c" stroke-width="1.2"/><path d="M1673.5 260.2 L1680.5 267.2 L1673.5 274.2" fill="none" stroke="#201f1e" stroke-width="1.2"/><rect x="1690.7" y="259.9" width="14.6" height="14.6" rx="2.8" fill="none" stroke="#201f1e" stroke-width="1.3"/><path d="M1695.7 259.9 V274.5 M1700.4 259.9 V274.5 M1690.7 264.9 H1705.3 M1690.7 269.59999999999997 H1705.3" stroke="#201f1e" stroke-width="1.15"/><path d="M1673.5 290.2 L1680.5 297.2 L1673.5 304.2" fill="none" stroke="#201f1e" stroke-width="1.2"/><rect x="1690.7" y="289.9" width="14.6" height="14.6" rx="2.8" fill="none" stroke="#201f1e" stroke-width="1.3"/><path d="M1695.7 289.9 V304.5 M1700.4 289.9 V304.5 M1690.7 294.9 H1705.3 M1690.7 299.59999999999997 H1705.3" stroke="#201f1e" stroke-width="1.15"/><path d="M1673.5 320.2 L1680.5 327.2 L1673.5 334.2" fill="none" stroke="#201f1e" stroke-width="1.2"/><path d="M1703.7 323.4 V321.9 Q1703.7 319.4 1701.2 319.4 H1693.2 Q1690.7 319.4 1690.7 321.9 V329.4 Q1690.7 331.9 1693.2 331.9 H1697.2" fill="none" stroke="#201f1e" stroke-width="1.3"/><path d="M1695.2 319.4 V331.9 M1699.5 319.4 V323.9 M1690.7 323.7 H1698.7 M1690.7 327.79999999999995 H1697.2" stroke="#201f1e" stroke-width="1.1"/><rect x="1698.7" y="324.59999999999997" width="8.3" height="11.3" rx="1.5" fill="#f3f2f1" stroke="#201f1e" stroke-width="1.3"/><path d="M1698.7 327.9 H1707.0" stroke="#201f1e" stroke-width="1.1"/><rect x="1699.3" y="328.59999999999997" width="7.1" height="6.7" fill="#201f1e"/><path d="M1701.7 328.59999999999997 V335.29999999999995 M1704.1000000000001 328.59999999999997 V335.29999999999995 M1699.3 331.9 H1706.4" stroke="#f3f2f1" stroke-width="0.7"/><path d="M1673.5 350.2 L1680.5 357.2 L1673.5 364.2" fill="none" stroke="#201f1e" stroke-width="1.2"/><path d="M1703.7 353.4 V351.9 Q1703.7 349.4 1701.2 349.4 H1693.2 Q1690.7 349.4 1690.7 351.9 V359.4 Q1690.7 361.9 1693.2 361.9 H1697.2" fill="none" stroke="#201f1e" stroke-width="1.3"/><path d="M1695.2 349.4 V361.9 M1699.5 349.4 V353.9 M1690.7 353.7 H1698.7 M1690.7 357.79999999999995 H1697.2" stroke="#201f1e" stroke-width="1.1"/><rect x="1698.7" y="354.59999999999997" width="8.3" height="11.3" rx="1.5" fill="#f3f2f1" stroke="#201f1e" stroke-width="1.3"/><path d="M1698.7 357.9 H1707.0" stroke="#201f1e" stroke-width="1.1"/><rect x="1699.3" y="358.59999999999997" width="7.1" height="6.7" fill="#201f1e"/><path d="M1701.7 358.59999999999997 V365.29999999999995 M1704.1000000000001 358.59999999999997 V365.29999999999995 M1699.3 361.9 H1706.4" stroke="#f3f2f1" stroke-width="0.7"/><path d="M1671 383.7 L1677.8 390.5 L1684.6 383.7" fill="none" stroke="#201f1e" stroke-width="1.2"/><rect x="1690.7" y="379.9" width="14.6" height="14.6" rx="2.8" fill="none" stroke="#201f1e" stroke-width="1.3"/><path d="M1695.7 379.9 V394.5 M1700.4 379.9 V394.5 M1690.7 384.9 H1705.3 M1690.7 389.59999999999997 H1705.3" stroke="#201f1e" stroke-width="1.15"/><circle cx="1705.4" cy="394.5" r="7.4" fill="#117865" stroke="#f3f2f1" stroke-width="1"/><path d="M1702.3 394.7 L1704.6 397.0 L1708.7 392.4" fill="none" stroke="#fff" stroke-width="1.3"/><rect x="1709.5" y="410.3" width="14.4" height="14.4" rx="2.5" fill="#fff" stroke="#605e5c" stroke-width="1"/><path d="M1747.8 412.7 V410.4 H1735.8 L1742.1 417.5 L1735.8 424.0 H1747.8 V421.7" fill="none" stroke="#201f1e" stroke-width="1.25" stroke-linejoin="miter"/><rect x="1709.5" y="440.3" width="14.4" height="14.4" rx="2" fill="#117865" stroke="#117865" stroke-width="1"/><path d="M1712.5 447.8 L1715.5 450.8 L1721.2 444.6" fill="none" stroke="#fff" stroke-width="1.5"/><rect x="1709.5" y="470.3" width="14.4" height="14.4" rx="2" fill="#117865" stroke="#117865" stroke-width="1"/><path d="M1712.5 477.8 L1715.5 480.8 L1721.2 474.6" fill="none" stroke="#fff" stroke-width="1.5"/><path d="M1747.8 472.7 V470.4 H1735.8 L1742.1 477.5 L1735.8 484.0 H1747.8 V481.7" fill="none" stroke="#201f1e" stroke-width="1.25" stroke-linejoin="miter"/><rect x="1709.5" y="500.3" width="14.4" height="14.4" rx="2.5" fill="#fff" stroke="#605e5c" stroke-width="1"/><path d="M1747.8 502.7 V500.4 H1735.8 L1742.1 507.5 L1735.8 514.0 H1747.8 V511.7" fill="none" stroke="#201f1e" stroke-width="1.25" stroke-linejoin="miter"/><rect x="1709.5" y="530.3" width="14.4" height="14.4" rx="2.5" fill="#fff" stroke="#605e5c" stroke-width="1"/><path d="M1747.8 532.7 V530.4000000000001 H1735.8 L1742.1 537.5 L1735.8 544.0 H1747.8 V541.7" fill="none" stroke="#201f1e" stroke-width="1.25" stroke-linejoin="miter"/><rect x="1709.5" y="560.3" width="14.4" height="14.4" rx="2.5" fill="#fff" stroke="#605e5c" stroke-width="1"/><path d="M1747.8 562.7 V560.4000000000001 H1735.8 L1742.1 567.5 L1735.8 574.0 H1747.8 V571.7" fill="none" stroke="#201f1e" stroke-width="1.25" stroke-linejoin="miter"/><path d="M1673.5 590.2 L1680.5 597.2 L1673.5 604.2" fill="none" stroke="#201f1e" stroke-width="1.2"/><path d="M1703.7 593.4000000000001 V591.9000000000001 Q1703.7 589.4000000000001 1701.2 589.4000000000001 H1693.2 Q1690.7 589.4000000000001 1690.7 591.9000000000001 V599.4000000000001 Q1690.7 601.9000000000001 1693.2 601.9000000000001 H1697.2" fill="none" stroke="#201f1e" stroke-width="1.3"/><path d="M1695.2 589.4000000000001 V601.9000000000001 M1699.5 589.4000000000001 V593.9000000000001 M1690.7 593.7 H1698.7 M1690.7 597.8000000000001 H1697.2" stroke="#201f1e" stroke-width="1.1"/><rect x="1698.7" y="594.6000000000001" width="8.3" height="11.3" rx="1.5" fill="#f3f2f1" stroke="#201f1e" stroke-width="1.3"/><path d="M1698.7 597.9000000000001 H1707.0" stroke="#201f1e" stroke-width="1.1"/><rect x="1699.3" y="598.6000000000001" width="7.1" height="6.7" fill="#201f1e"/><path d="M1701.7 598.6000000000001 V605.3000000000001 M1704.1000000000001 598.6000000000001 V605.3000000000001 M1699.3 601.9000000000001 H1706.4" stroke="#f3f2f1" stroke-width="0.7"/><path d="M1673.5 620.2 L1680.5 627.2 L1673.5 634.2" fill="none" stroke="#201f1e" stroke-width="1.2"/><rect x="1690.7" y="619.9000000000001" width="14.6" height="14.6" rx="2.8" fill="none" stroke="#201f1e" stroke-width="1.3"/><path d="M1695.7 619.9000000000001 V634.5000000000001 M1700.4 619.9000000000001 V634.5000000000001 M1690.7 624.9000000000001 H1705.3 M1690.7 629.6000000000001 H1705.3" stroke="#201f1e" stroke-width="1.15"/><path d="M1673.5 650.2 L1680.5 657.2 L1673.5 664.2" fill="none" stroke="#201f1e" stroke-width="1.2"/><rect x="1690.7" y="649.9000000000001" width="14.6" height="14.6" rx="2.8" fill="none" stroke="#201f1e" stroke-width="1.3"/><path d="M1695.7 649.9000000000001 V664.5000000000001 M1700.4 649.9000000000001 V664.5000000000001 M1690.7 654.9000000000001 H1705.3 M1690.7 659.6000000000001 H1705.3" stroke="#201f1e" stroke-width="1.15"/><path d="M1673.5 680.2 L1680.5 687.2 L1673.5 694.2" fill="none" stroke="#201f1e" stroke-width="1.2"/><rect x="1690.7" y="679.9000000000001" width="14.6" height="14.6" rx="2.8" fill="none" stroke="#201f1e" stroke-width="1.3"/><path d="M1695.7 679.9000000000001 V694.5000000000001 M1700.4 679.9000000000001 V694.5000000000001 M1690.7 684.9000000000001 H1705.3 M1690.7 689.6000000000001 H1705.3" stroke="#201f1e" stroke-width="1.15"/><path d="M1673.5 710.2 L1680.5 717.2 L1673.5 724.2" fill="none" stroke="#201f1e" stroke-width="1.2"/><rect x="1690.7" y="709.9000000000001" width="14.6" height="14.6" rx="2.8" fill="none" stroke="#201f1e" stroke-width="1.3"/><path d="M1695.7 709.9000000000001 V724.5000000000001 M1700.4 709.9000000000001 V724.5000000000001 M1690.7 714.9000000000001 H1705.3 M1690.7 719.6000000000001 H1705.3" stroke="#201f1e" stroke-width="1.15"/><path d="M1673.5 740.2 L1680.5 747.2 L1673.5 754.2" fill="none" stroke="#201f1e" stroke-width="1.2"/><rect x="1690.7" y="739.9000000000001" width="14.6" height="14.6" rx="2.8" fill="none" stroke="#201f1e" stroke-width="1.3"/><path d="M1695.7 739.9000000000001 V754.5000000000001 M1700.4 739.9000000000001 V754.5000000000001 M1690.7 744.9000000000001 H1705.3 M1690.7 749.6000000000001 H1705.3" stroke="#201f1e" stroke-width="1.15"/><path d="M1673.5 770.2 L1680.5 777.2 L1673.5 784.2" fill="none" stroke="#201f1e" stroke-width="1.2"/><path d="M1703.7 773.4000000000001 V771.9000000000001 Q1703.7 769.4000000000001 1701.2 769.4000000000001 H1693.2 Q1690.7 769.4000000000001 1690.7 771.9000000000001 V779.4000000000001 Q1690.7 781.9000000000001 1693.2 781.9000000000001 H1697.2" fill="none" stroke="#201f1e" stroke-width="1.3"/><path d="M1695.2 769.4000000000001 V781.9000000000001 M1699.5 769.4000000000001 V773.9000000000001 M1690.7 773.7 H1698.7 M1690.7 777.8000000000001 H1697.2" stroke="#201f1e" stroke-width="1.1"/><rect x="1698.7" y="774.6000000000001" width="8.3" height="11.3" rx="1.5" fill="#f3f2f1" stroke="#201f1e" stroke-width="1.3"/><path d="M1698.7 777.9000000000001 H1707.0" stroke="#201f1e" stroke-width="1.1"/><rect x="1699.3" y="778.6000000000001" width="7.1" height="6.7" fill="#201f1e"/><path d="M1701.7 778.6000000000001 V785.3000000000001 M1704.1000000000001 778.6000000000001 V785.3000000000001 M1699.3 781.9000000000001 H1706.4" stroke="#f3f2f1" stroke-width="0.7"/><path d="M1673.5 800.2 L1680.5 807.2 L1673.5 814.2" fill="none" stroke="#201f1e" stroke-width="1.2"/><path d="M1703.7 803.4000000000001 V801.9000000000001 Q1703.7 799.4000000000001 1701.2 799.4000000000001 H1693.2 Q1690.7 799.4000000000001 1690.7 801.9000000000001 V809.4000000000001 Q1690.7 811.9000000000001 1693.2 811.9000000000001 H1697.2" fill="none" stroke="#201f1e" stroke-width="1.3"/><path d="M1695.2 799.4000000000001 V811.9000000000001 M1699.5 799.4000000000001 V803.9000000000001 M1690.7 803.7 H1698.7 M1690.7 807.8000000000001 H1697.2" stroke="#201f1e" stroke-width="1.1"/><rect x="1698.7" y="804.6000000000001" width="8.3" height="11.3" rx="1.5" fill="#f3f2f1" stroke="#201f1e" stroke-width="1.3"/><path d="M1698.7 807.9000000000001 H1707.0" stroke="#201f1e" stroke-width="1.1"/><rect x="1699.3" y="808.6000000000001" width="7.1" height="6.7" fill="#201f1e"/><path d="M1701.7 808.6000000000001 V815.3000000000001 M1704.1000000000001 808.6000000000001 V815.3000000000001 M1699.3 811.9000000000001 H1706.4" stroke="#f3f2f1" stroke-width="0.7"/><path d="M1673.5 830.2 L1680.5 837.2 L1673.5 844.2" fill="none" stroke="#201f1e" stroke-width="1.2"/><path d="M1703.7 833.4000000000001 V831.9000000000001 Q1703.7 829.4000000000001 1701.2 829.4000000000001 H1693.2 Q1690.7 829.4000000000001 1690.7 831.9000000000001 V839.4000000000001 Q1690.7 841.9000000000001 1693.2 841.9000000000001 H1697.2" fill="none" stroke="#201f1e" stroke-width="1.3"/><path d="M1695.2 829.4000000000001 V841.9000000000001 M1699.5 829.4000000000001 V833.9000000000001 M1690.7 833.7 H1698.7 M1690.7 837.8000000000001 H1697.2" stroke="#201f1e" stroke-width="1.1"/><rect x="1698.7" y="834.6000000000001" width="8.3" height="11.3" rx="1.5" fill="#f3f2f1" stroke="#201f1e" stroke-width="1.3"/><path d="M1698.7 837.9000000000001 H1707.0" stroke="#201f1e" stroke-width="1.1"/><rect x="1699.3" y="838.6000000000001" width="7.1" height="6.7" fill="#201f1e"/><path d="M1701.7 838.6000000000001 V845.3000000000001 M1704.1000000000001 838.6000000000001 V845.3000000000001 M1699.3 841.9000000000001 H1706.4" stroke="#f3f2f1" stroke-width="0.7"/><path d="M1673.5 860.2 L1680.5 867.2 L1673.5 874.2" fill="none" stroke="#201f1e" stroke-width="1.2"/><rect x="1690.7" y="859.9000000000001" width="14.6" height="14.6" rx="2.8" fill="none" stroke="#201f1e" stroke-width="1.3"/><path d="M1695.7 859.9000000000001 V874.5000000000001 M1700.4 859.9000000000001 V874.5000000000001 M1690.7 864.9000000000001 H1705.3 M1690.7 869.6000000000001 H1705.3" stroke="#201f1e" stroke-width="1.15"/><path d="M1673.5 890.2 L1680.5 897.2 L1673.5 904.2" fill="none" stroke="#201f1e" stroke-width="1.2"/><path d="M1703.7 893.4000000000001 V891.9000000000001 Q1703.7 889.4000000000001 1701.2 889.4000000000001 H1693.2 Q1690.7 889.4000000000001 1690.7 891.9000000000001 V899.4000000000001 Q1690.7 901.9000000000001 1693.2 901.9000000000001 H1697.2" fill="none" stroke="#201f1e" stroke-width="1.3"/><path d="M1695.2 889.4000000000001 V901.9000000000001 M1699.5 889.4000000000001 V893.9000000000001 M1690.7 893.7 H1698.7 M1690.7 897.8000000000001 H1697.2" stroke="#201f1e" stroke-width="1.1"/><rect x="1698.7" y="894.6000000000001" width="8.3" height="11.3" rx="1.5" fill="#f3f2f1" stroke="#201f1e" stroke-width="1.3"/><path d="M1698.7 897.9000000000001 H1707.0" stroke="#201f1e" stroke-width="1.1"/><rect x="1699.3" y="898.6000000000001" width="7.1" height="6.7" fill="#201f1e"/><path d="M1701.7 898.6000000000001 V905.3000000000001 M1704.1000000000001 898.6000000000001 V905.3000000000001 M1699.3 901.9000000000001 H1706.4" stroke="#f3f2f1" stroke-width="0.7"/><path d="M1673.5 920.2 L1680.5 927.2 L1673.5 934.2" fill="none" stroke="#201f1e" stroke-width="1.2"/><path d="M1703.7 923.4000000000001 V921.9000000000001 Q1703.7 919.4000000000001 1701.2 919.4000000000001 H1693.2 Q1690.7 919.4000000000001 1690.7 921.9000000000001 V929.4000000000001 Q1690.7 931.9000000000001 1693.2 931.9000000000001 H1697.2" fill="none" stroke="#201f1e" stroke-width="1.3"/><path d="M1695.2 919.4000000000001 V931.9000000000001 M1699.5 919.4000000000001 V923.9000000000001 M1690.7 923.7 H1698.7 M1690.7 927.8000000000001 H1697.2" stroke="#201f1e" stroke-width="1.1"/><rect x="1698.7" y="924.6000000000001" width="8.3" height="11.3" rx="1.5" fill="#f3f2f1" stroke="#201f1e" stroke-width="1.3"/><path d="M1698.7 927.9000000000001 H1707.0" stroke="#201f1e" stroke-width="1.1"/><rect x="1699.3" y="928.6000000000001" width="7.1" height="6.7" fill="#201f1e"/><path d="M1701.7 928.6000000000001 V935.3000000000001 M1704.1000000000001 928.6000000000001 V935.3000000000001 M1699.3 931.9000000000001 H1706.4" stroke="#f3f2f1" stroke-width="0.7"/><path d="M1891.3 167.2 V181.3 A9.0 3.2 0 0 0 1909.3 181.3 V167.2" fill="none" stroke="#323130" stroke-width="1.4"/><ellipse cx="1900.3" cy="167.2" rx="9.0" ry="3.2" fill="none" stroke="#323130" stroke-width="1.4"/><g fill="#e6e6e6" stroke="#323130" stroke-width="1.3"><rect x="1902" y="209" width="6" height="8"/><rect x="1896.5" y="203.5" width="5.8" height="22.5"/><rect x="1890.8" y="212" width="5.8" height="14"/></g><rect x="1900.5" y="211.5" width="13" height="16" fill="#e6e6e6"/><path d="M1902 214.7 V224.3 A5.25 2.2 0 0 0 1912.5 224.3 V214.7" fill="#fdf3e7" stroke="#d9730d" stroke-width="1.3"/><ellipse cx="1907.25" cy="214.7" rx="5.25" ry="2.2" fill="#fdf3e7" stroke="#d9730d" stroke-width="1.3"/><g fill="#e6e6e6" stroke="#323130" stroke-width="1.3"><rect x="1902" y="249" width="6" height="10"/><rect x="1896.5" y="243.5" width="5.8" height="18"/><rect x="1890.8" y="252" width="5.8" height="9.5"/></g><path d="M1911.5 251.5 L1903 262 L1901 260.3 L1909.8 250.2 Q1911.5 249.5 1911.5 251.5 Z" fill="#e6e6e6" stroke="#323130" stroke-width="1.1"/><path d="M1901 260.3 L1903 262 Q1901.5 267.5 1893 265.8 Q1897 264.5 1898 262 Q1899 260 1901 260.3 Z" fill="#83beec" stroke="#2b7cd3" stroke-width="1.1"/><path d="M1893.8 284.2 H1906.3 V304 L1900 298.3 L1893.8 304 Z" fill="none" stroke="#323130" stroke-width="1.4" stroke-linejoin="miter"/><path d="M1889.5 331 A6.3 6.3 0 0 1 1901 327 M1901.5 333 A6.3 6.3 0 0 1 1890 336.5" fill="none" stroke="#2e8b45" stroke-width="1.5"/><path d="M1901.8 323 V327.8 H1897 M1889.2 340.5 V335.7 H1894" fill="none" stroke="#2e8b45" stroke-width="1.5"/><path d="M1903 324.3 H1910.5 V332.5 M1904 327.5 H1908 M1904 330.5 H1908 M1896 341 H1891 V344.5 H1902" fill="none" stroke="#323130" stroke-width="1.1"/><path d="M1900.3 334.3 H1911.3 L1907.3 339.3 V344.8 H1904.3 V339.3 Z" fill="#fafafa" stroke="#323130" stroke-width="1.4" stroke-linejoin="round"/><rect x="1897.5" y="363.2" width="13.5" height="13" fill="#f7c46c" stroke="#d9730d" stroke-width="1.2"/><rect x="1889.5" y="373.8" width="13" height="11.5" fill="#fafafa" stroke="#323130" stroke-width="1.3"/><path d="M1901.5 368.5 V382.5 L1904.7 379.7 L1907 385.5 L1909.3 384.5 L1907 379 L1911.3 378.7 Z" fill="#fff" stroke="#323130" stroke-width="1.1" stroke-linejoin="round"/><path d="M1900 403.5 V424.7 M1889.3 414.1 H1910.8" stroke="#201f1e" stroke-width="1.5"/><rect x="1897.9" y="912.7" width="5.2" height="5" rx="1" transform="rotate(0 1900.5 924.5)" fill="#fafafa" stroke="#323130" stroke-width="1.3"/><rect x="1897.9" y="912.7" width="5.2" height="5" rx="1" transform="rotate(45 1900.5 924.5)" fill="#fafafa" stroke="#323130" stroke-width="1.3"/><rect x="1897.9" y="912.7" width="5.2" height="5" rx="1" transform="rotate(90 1900.5 924.5)" fill="#fafafa" stroke="#323130" stroke-width="1.3"/><rect x="1897.9" y="912.7" width="5.2" height="5" rx="1" transform="rotate(135 1900.5 924.5)" fill="#fafafa" stroke="#323130" stroke-width="1.3"/><rect x="1897.9" y="912.7" width="5.2" height="5" rx="1" transform="rotate(180 1900.5 924.5)" fill="#fafafa" stroke="#323130" stroke-width="1.3"/><rect x="1897.9" y="912.7" width="5.2" height="5" rx="1" transform="rotate(225 1900.5 924.5)" fill="#fafafa" stroke="#323130" stroke-width="1.3"/><rect x="1897.9" y="912.7" width="5.2" height="5" rx="1" transform="rotate(270 1900.5 924.5)" fill="#fafafa" stroke="#323130" stroke-width="1.3"/><rect x="1897.9" y="912.7" width="5.2" height="5" rx="1" transform="rotate(315 1900.5 924.5)" fill="#fafafa" stroke="#323130" stroke-width="1.3"/><circle cx="1900.5" cy="924.5" r="8.6" fill="#fafafa" stroke="none"/><circle cx="1900.5" cy="924.5" r="8.2" fill="none" stroke="#323130" stroke-width="1.3" stroke-dasharray="3.6 2.84" stroke-dashoffset="-1.42"/><circle cx="1900.5" cy="924.5" r="3.4" fill="none" stroke="#323130" stroke-width="1.3"/></svg>
<div style="left:64px;top:935px;width:30px;height:3px;background:#117865;border-radius:1.5px;"></div>
<div style="left:210px;top:900px;width:1px;height:44px;background:#605e5c;"></div>
<div style="left:211px;top:900px;width:466px;height:44px;background:#ffffff;"></div>
<div style="left:438px;top:900px;width:1px;height:44px;background:#e1dfdd;"></div>
<div style="left:438.8px;top:938.5px;width:237.7px;height:5.5px;background:#117865;"></div>
<div style="left:676.5px;top:899.7px;width:49.5px;height:44.3px;background:#117865;"></div>
<span class="t" style="left:235.99px;top:915.00px;font-size:15.3px;color:#201f1e;transform:scaleX(0.9654);">Column chart in Power BI-I</span>
<span class="t sb" style="left:463.99px;top:915.00px;font-size:15.3px;color:#201f1e;">Column chart in Power BI-II</span>
<span class="t" style="left:5.71px;top:953.00px;font-size:14.6px;color:#323130;transform:scaleX(0.9849);">Page 2 of 2</span>
<svg style="left:0px;top:0px;" width="1918" height="970" viewBox="0 0 1918 970"><rect x="66.3" y="909.6" width="23.2" height="13.2" rx="1" fill="none" stroke="#605e5c" stroke-width="1.3"/><path d="M78 922.8 V925.6 M73.5 925.8 H82.5" stroke="#605e5c" stroke-width="1.3"/><rect x="126" y="906.8" width="15" height="23.5" rx="1.8" fill="none" stroke="#605e5c" stroke-width="1.3"/><path d="M132.3 927 H134.8" stroke="#605e5c" stroke-width="1.3"/><path d="M174.3 916.8 V926.3 L168.3 921.5 Z" fill="#c8c6c4"/><path d="M196.3 916.8 V926.3 L202.3 921.5 Z" fill="#c8c6c4"/><path d="M701 913.5 V928.5 M693.5 921 H708.5" stroke="#fff" stroke-width="3"/><path d="M1656 959 H1660.8" stroke="#201f1e" stroke-width="1.2"/><path d="M1667.4 959 H1791.6" stroke="#605e5c" stroke-width="1"/><rect x="1705" y="952.7" width="5" height="13" fill="#605e5c"/><path d="M1729.5 956 V962.8" stroke="#605e5c" stroke-width="1"/><path d="M1803.5 954.2 V963.8 M1798.8 959 H1808.3" stroke="#201f1e" stroke-width="1.4"/><path d="M1878.8 957.3 V954.9 Q1878.8 952.9 1880.8 952.9 H1884.3999999999999 M1890.8000000000002 952.9 H1894.4 Q1896.4 952.9 1896.4 954.9 V957.3 M1896.4 961.9 V964.3 Q1896.4 966.3 1894.4 966.3 H1890.8000000000002 M1884.3999999999999 966.3 H1880.8 Q1878.8 966.3 1878.8 964.3 V961.9" fill="none" stroke="#4a4846" stroke-width="1.9"/></svg>
<span class="t" style="left:1825.71px;top:952.00px;font-size:14.6px;color:#323130;transform:scaleX(0.9490);">69%</span>
</div></body></html>
